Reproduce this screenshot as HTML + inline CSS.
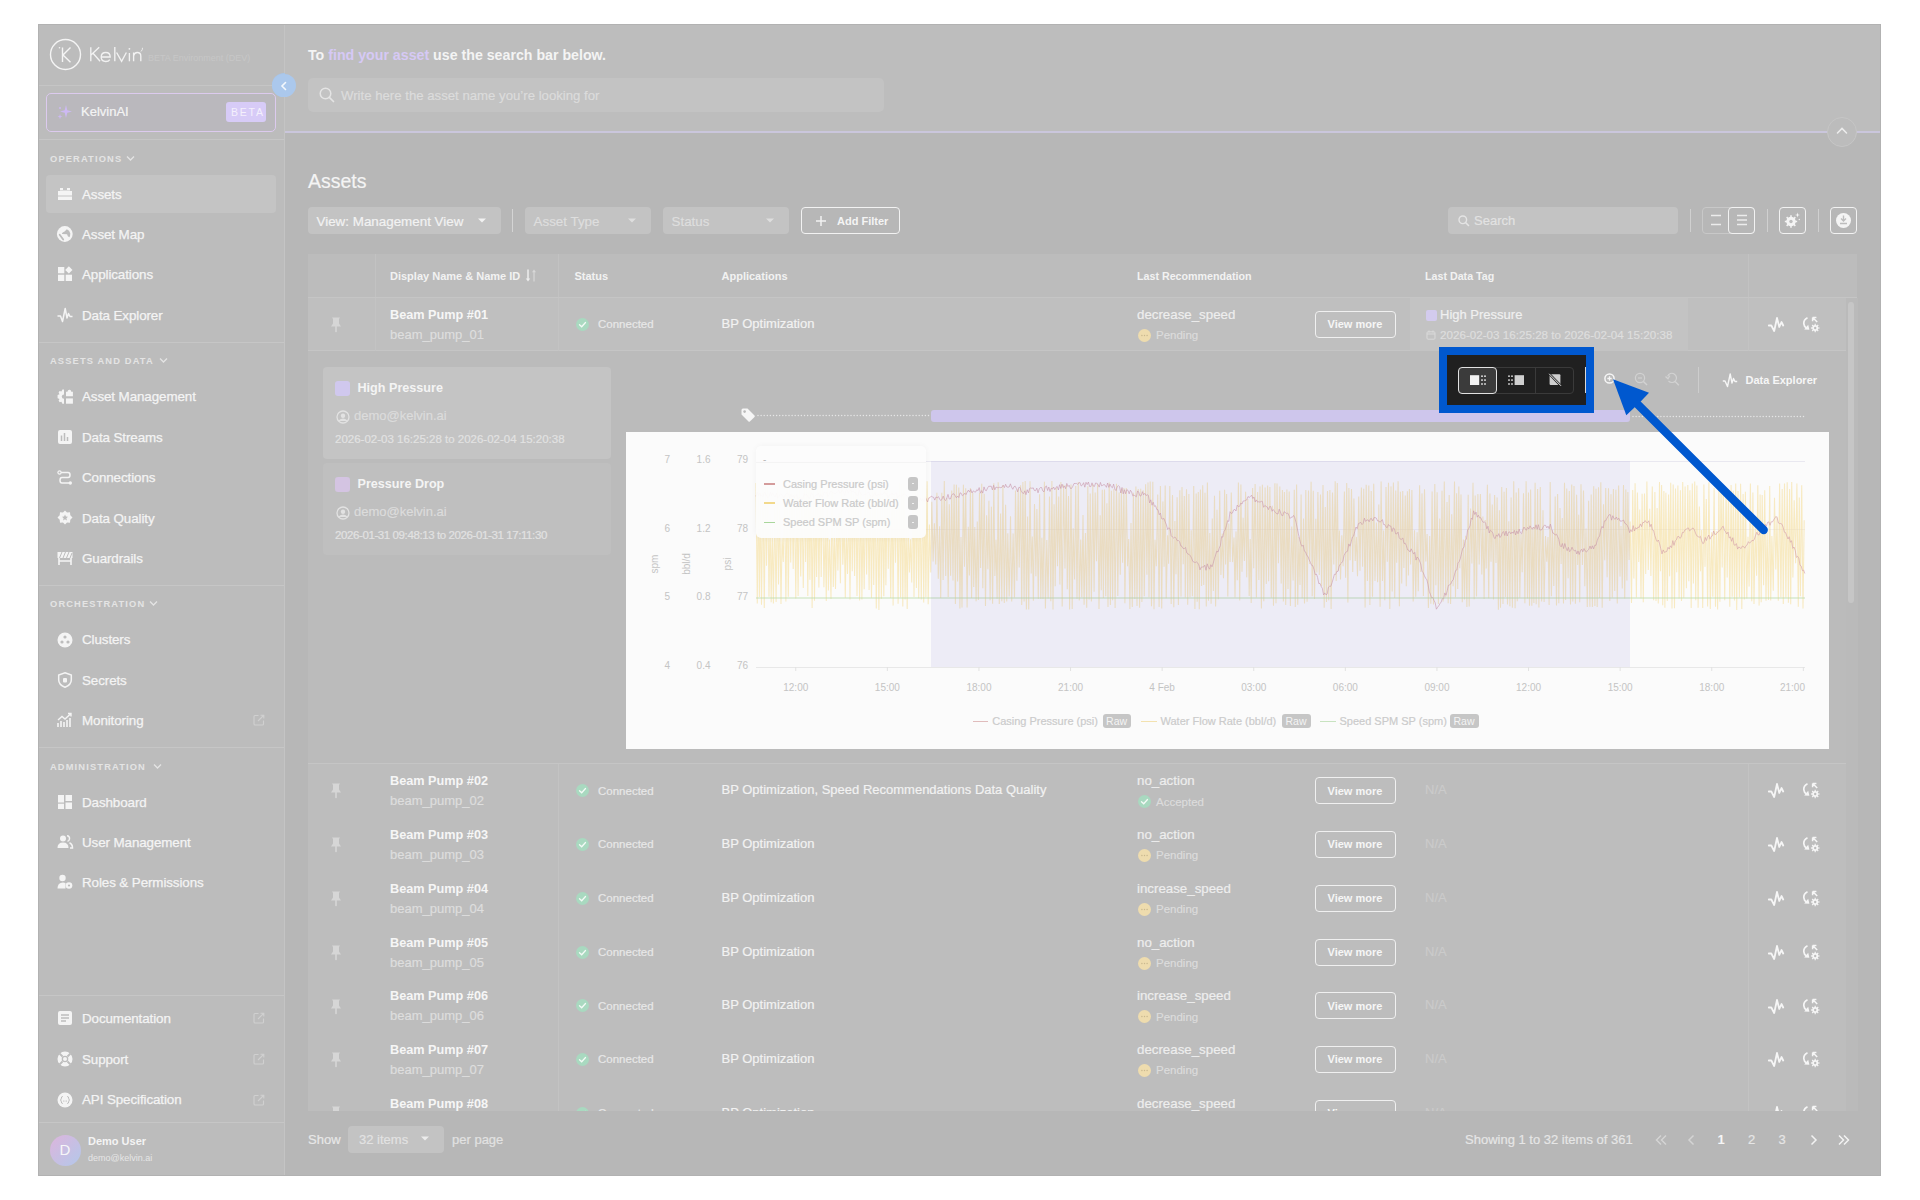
<!DOCTYPE html><html><head><meta charset="utf-8"><style>
*{box-sizing:border-box;margin:0;padding:0}
html,body{width:1920px;height:1200px;overflow:hidden;background:#fff;font-family:"Liberation Sans", sans-serif}
.a{position:absolute;white-space:nowrap;line-height:20px}
.b{position:absolute}
svg{position:absolute;overflow:visible}
</style></head><body>
<div class="b" style="left:38px;top:24px;width:1843px;height:1152px;background:#b7b7b7"></div><div class="b" style="left:38px;top:24px;width:247px;height:1152px;background:#bcbcbc;border-right:1px solid #c4c4c4"></div><svg style="left:49px;top:38px;" width="34" height="34" viewBox="0 0 34 34"><circle cx="16.5" cy="16.5" r="15" fill="none" stroke="#f4f4f4" stroke-width="1.4"/><path d="M13.5 9.5 V24 M21.5 9.5 L14 17 L21.5 24.3" fill="none" stroke="#f4f4f4" stroke-width="1.4"/><circle cx="10.5" cy="9.8" r="0.8" fill="#f4f4f4"/></svg><svg style="left:85px;top:44px;" width="64" height="22" viewBox="0 0 64 22"><g fill="none" stroke="#f2f2f2" stroke-width="1.35"><path d="M5.8 3.3 V17.3 M14.2 3.3 L6 11 M8 9.3 L15.1 17.3"/><path d="M16.4 13 H25.2 Q25.2 8.5 20.8 8.5 Q16.2 8.5 16.2 13 Q16.2 17.5 20.8 17.5 Q23.6 17.5 24.8 15.6"/><path d="M29.8 3 V17.3"/><path d="M31.6 8.5 L36.6 17.3 L41.4 8.5"/><path d="M44.4 9 V17.3"/><path d="M48.6 8.6 V17.3 M48.6 11.8 Q49.4 8.5 52.2 8.5 Q55.8 8.5 55.8 12 V17.3"/></g><circle cx="44.4" cy="4.8" r="0.9" fill="#f2f2f2"/></svg><svg style="left:139px;top:46.5px;" width="6" height="6" viewBox="0 0 6 6"><path d="M3.5 0.8 Q3.8 2.8 2 4.5" fill="none" stroke="#f0f0f0" stroke-width="0.9"/></svg><div class="a" style="left:148px;top:48px;font-size:9px;color:#c7c7c7;font-weight:400;">BETA Environment (DEV)</div><div class="b" style="left:38px;top:84.5px;width:246px;height:1.5px;background:#c5c5c5;"></div><div class="b" style="left:38px;top:139px;width:246px;height:1px;background:#c6c6c6;"></div><div class="b" style="left:46px;top:93px;width:230px;height:39px;background:#bab8bd;border:1.5px solid #dccaee;border-radius:5px"></div><svg style="left:56px;top:103px;" width="18" height="18" viewBox="0 0 18 18"><path d="M10 2 L11.3 7.2 L16 8.5 L11.3 9.8 L10 15 L8.7 9.8 L4 8.5 L8.7 7.2 Z" fill="#cdb9f3"/><path d="M4 11 L4.6 13 L6.5 13.6 L4.6 14.2 L4 16.2 L3.4 14.2 L1.5 13.6 L3.4 13 Z" fill="#cdb9f3"/><circle cx="4" cy="5" r="1" fill="#cdb9f3"/></svg><div class="a" style="left:81px;top:102px;font-size:13px;color:#f4f4f4;font-weight:400;-webkit-text-stroke:0.2px #f4f4f4;">KelvinAI</div><div class="b" style="left:226px;top:102px;width:40px;height:20px;background:#d7cbf7;border-radius:3px"></div><div class="a" style="left:231px;top:102px;font-size:10.5px;color:#f4f0fc;font-weight:400;letter-spacing:1.75px">BETA</div><div class="a" style="left:50px;top:148.5px;font-size:9.3px;color:#e4e4e4;font-weight:700;letter-spacing:1.15px">OPERATIONS</div><svg style="left:126px;top:154.5px;" width="9" height="7" viewBox="0 0 9 7"><path d="M1 1.5 L4.5 5 L8 1.5" fill="none" stroke="#e4e4e4" stroke-width="1.3"/></svg><div class="a" style="left:50px;top:351px;font-size:9.3px;color:#e4e4e4;font-weight:700;letter-spacing:1.15px">ASSETS AND DATA</div><svg style="left:159px;top:357px;" width="9" height="7" viewBox="0 0 9 7"><path d="M1 1.5 L4.5 5 L8 1.5" fill="none" stroke="#e4e4e4" stroke-width="1.3"/></svg><div class="a" style="left:50px;top:594px;font-size:9.3px;color:#e4e4e4;font-weight:700;letter-spacing:1.15px">ORCHESTRATION</div><svg style="left:149px;top:600px;" width="9" height="7" viewBox="0 0 9 7"><path d="M1 1.5 L4.5 5 L8 1.5" fill="none" stroke="#e4e4e4" stroke-width="1.3"/></svg><div class="a" style="left:50px;top:756.5px;font-size:9.3px;color:#e4e4e4;font-weight:700;letter-spacing:1.15px">ADMINISTRATION</div><svg style="left:153px;top:762.5px;" width="9" height="7" viewBox="0 0 9 7"><path d="M1 1.5 L4.5 5 L8 1.5" fill="none" stroke="#e4e4e4" stroke-width="1.3"/></svg><div class="b" style="left:38px;top:342px;width:246px;height:1px;background:#c6c6c6;"></div><div class="b" style="left:38px;top:585px;width:246px;height:1px;background:#c6c6c6;"></div><div class="b" style="left:38px;top:747px;width:246px;height:1px;background:#c6c6c6;"></div><div class="b" style="left:38px;top:995px;width:246px;height:1px;background:#c6c6c6;"></div><div class="b" style="left:38px;top:1122px;width:246px;height:1px;background:#c6c6c6;"></div><div class="b" style="left:46px;top:175px;width:230px;height:38px;background:#c4c4c4;border-radius:4px"></div><svg style="left:57px;top:186px;" width="16" height="16" viewBox="0 0 16 16"><path d="M1 5 H15 V9.5 H1 Z M1 10.5 H15 V14 H1 Z M3 2 H6 V4 H10 V2 H13 V4.5 H3 Z" fill="#f4f4f4"/></svg><div class="a" style="left:82px;top:184.5px;font-size:13.4px;color:#f4f4f4;font-weight:400;-webkit-text-stroke:0.2px #f4f4f4;-webkit-text-stroke:0.25px #f4f4f4;letter-spacing:-0.1px">Assets</div><svg style="left:57px;top:226px;" width="16" height="16" viewBox="0 0 16 16"><circle cx="7.8" cy="8" r="7.9" fill="#f4f4f4"/><path d="M2.7 8.7 L6.2 13.5" stroke="#bdbdbd" stroke-width="1.8" stroke-linecap="round"/><path d="M4.9 7.2 Q6 6 7.6 5.4 L9.8 3.2 Q12.6 4.3 13.3 7.4 Q13.3 9.6 12.4 11.2 Q10.4 10.6 10.1 8.3 Q7.4 8.1 5.2 8 Z" fill="#bdbdbd"/></svg><div class="a" style="left:82px;top:224.5px;font-size:13.4px;color:#f4f4f4;font-weight:400;-webkit-text-stroke:0.2px #f4f4f4;-webkit-text-stroke:0.25px #f4f4f4;letter-spacing:-0.1px">Asset Map</div><svg style="left:57px;top:266px;" width="16" height="16" viewBox="0 0 16 16"><rect x="1" y="1" width="6.3" height="6.3" fill="#f4f4f4"/><rect x="1" y="8.7" width="6.3" height="6.3" fill="#f4f4f4"/><rect x="8.7" y="8.7" width="6.3" height="6.3" fill="#f4f4f4"/><path d="M11.85 0.3 L15.5 3.95 L11.85 7.6 L8.2 3.95 Z" fill="#f4f4f4"/></svg><div class="a" style="left:82px;top:265.0px;font-size:13.4px;color:#f4f4f4;font-weight:400;-webkit-text-stroke:0.2px #f4f4f4;-webkit-text-stroke:0.25px #f4f4f4;letter-spacing:-0.1px">Applications</div><svg style="left:57px;top:307px;" width="16" height="16" viewBox="0 0 16 16"><path d="M0.5 9 L3.5 9 L5.5 14.5 L8.2 1.5 L10 11 L11.5 6.5 L13 9.5 L15.5 9.5" fill="none" stroke="#f4f4f4" stroke-width="1.5" stroke-linejoin="round"/></svg><div class="a" style="left:82px;top:305.5px;font-size:13.4px;color:#f4f4f4;font-weight:400;-webkit-text-stroke:0.2px #f4f4f4;-webkit-text-stroke:0.25px #f4f4f4;letter-spacing:-0.1px">Data Explorer</div><svg style="left:57px;top:389px;" width="16" height="16" viewBox="0 0 16 16"><path d="M7 0.4 V14.7 H5.4 L4.4 12.8 L2.6 13.2 L1.6 11.6 L2.5 10 L0.6 9.2 V6 L2.5 5.2 L1.6 3.6 L2.6 2 L4.4 2.4 L5.4 0.4 Z" fill="#f4f4f4"/><circle cx="7" cy="7.6" r="2.2" fill="#bdbdbd"/><path d="M9 7.2 V2.8 H10.4 Q10.9 0.5 12.6 0.7 Q14 0.9 14.3 2.8 H15.9 V7.2 Z" fill="#f4f4f4"/><rect x="9" y="9.4" width="6.9" height="5.3" fill="#f4f4f4"/></svg><div class="a" style="left:82px;top:387.3px;font-size:13.4px;color:#f4f4f4;font-weight:400;-webkit-text-stroke:0.2px #f4f4f4;-webkit-text-stroke:0.25px #f4f4f4;letter-spacing:-0.1px">Asset Management</div><svg style="left:57px;top:429px;" width="16" height="16" viewBox="0 0 16 16"><rect x="1" y="1" width="14" height="14" rx="2" fill="#f4f4f4"/><path d="M4.5 6.5 V12 M7.5 4 V12 M10.5 8 V12" stroke="#bdbdbd" stroke-width="1.5"/></svg><div class="a" style="left:82px;top:427.5px;font-size:13.4px;color:#f4f4f4;font-weight:400;-webkit-text-stroke:0.2px #f4f4f4;-webkit-text-stroke:0.25px #f4f4f4;letter-spacing:-0.1px">Data Streams</div><svg style="left:57px;top:470px;" width="16" height="16" viewBox="0 0 16 16"><circle cx="2.5" cy="2.5" r="1.6" fill="none" stroke="#f4f4f4" stroke-width="1.2"/><path d="M4 2.5 H11 Q13 2.5 13 5 Q13 7.5 11 7.5 H5 Q3 7.5 3 10.2 Q3 13 5 13 H12" fill="none" stroke="#f4f4f4" stroke-width="1.5"/><circle cx="13.3" cy="13" r="1.7" fill="#f4f4f4"/></svg><div class="a" style="left:82px;top:468.0px;font-size:13.4px;color:#f4f4f4;font-weight:400;-webkit-text-stroke:0.2px #f4f4f4;-webkit-text-stroke:0.25px #f4f4f4;letter-spacing:-0.1px">Connections</div><svg style="left:57px;top:510px;" width="16" height="16" viewBox="0 0 16 16"><path d="M8 0.5 L10 2.5 L13 2.2 L13.3 5.2 L15.5 7.5 L13.3 9.8 L13 12.8 L10 12.5 L8 14.5 L6 12.5 L3 12.8 L2.7 9.8 L0.5 7.5 L2.7 5.2 L3 2.2 L6 2.5 Z" fill="#f4f4f4"/><path d="M8 4.5 L8.9 6.6 L11 6.8 L9.4 8.2 L9.9 10.4 L8 9.2 L6.1 10.4 L6.6 8.2 L5 6.8 L7.1 6.6 Z" fill="#bdbdbd"/></svg><div class="a" style="left:82px;top:508.5px;font-size:13.4px;color:#f4f4f4;font-weight:400;-webkit-text-stroke:0.2px #f4f4f4;-webkit-text-stroke:0.25px #f4f4f4;letter-spacing:-0.1px">Data Quality</div><svg style="left:57px;top:550px;" width="16" height="16" viewBox="0 0 16 16"><rect x="0.5" y="2" width="15" height="6" fill="#f4f4f4"/><path d="M2.5 8 L5 2 M6 8 L8.5 2 M9.5 8 L12 2 M13 8 L15 3" stroke="#bdbdbd" stroke-width="1"/><path d="M2 8 V15 M14 8 V15 M2 11 H14" stroke="#f4f4f4" stroke-width="1.6"/></svg><div class="a" style="left:82px;top:548.5px;font-size:13.4px;color:#f4f4f4;font-weight:400;-webkit-text-stroke:0.2px #f4f4f4;-webkit-text-stroke:0.25px #f4f4f4;letter-spacing:-0.1px">Guardrails</div><svg style="left:57px;top:632px;" width="16" height="16" viewBox="0 0 16 16"><circle cx="8" cy="8" r="7.5" fill="#f4f4f4"/><circle cx="8" cy="5" r="1.6" fill="#bdbdbd"/><circle cx="5" cy="10" r="1.6" fill="#bdbdbd"/><circle cx="11" cy="10" r="1.6" fill="#bdbdbd"/></svg><div class="a" style="left:82px;top:630.1px;font-size:13.4px;color:#f4f4f4;font-weight:400;-webkit-text-stroke:0.2px #f4f4f4;-webkit-text-stroke:0.25px #f4f4f4;letter-spacing:-0.1px">Clusters</div><svg style="left:57px;top:672px;" width="16" height="16" viewBox="0 0 16 16"><path d="M8 0.8 L14.3 3 V8 Q14.3 12.8 8 15.2 Q1.7 12.8 1.7 8 V3 Z" fill="none" stroke="#f4f4f4" stroke-width="1.5"/><rect x="6" y="6" width="4" height="4.5" rx="1" fill="#f4f4f4"/></svg><div class="a" style="left:82px;top:670.5px;font-size:13.4px;color:#f4f4f4;font-weight:400;-webkit-text-stroke:0.2px #f4f4f4;-webkit-text-stroke:0.25px #f4f4f4;letter-spacing:-0.1px">Secrets</div><svg style="left:57px;top:712px;" width="16" height="16" viewBox="0 0 16 16"><path d="M1 15 V11 M4 15 V9 M7 15 V10 M10 15 V8 M13 15 V6" stroke="#f4f4f4" stroke-width="1.6"/><path d="M1 8 L5 4.5 L8 7 L14 1.5 M11 1.5 H14 V4.5" fill="none" stroke="#f4f4f4" stroke-width="1.4"/></svg><div class="a" style="left:82px;top:711.0px;font-size:13.4px;color:#f4f4f4;font-weight:400;-webkit-text-stroke:0.2px #f4f4f4;-webkit-text-stroke:0.25px #f4f4f4;letter-spacing:-0.1px">Monitoring</div><svg style="left:57px;top:794px;" width="16" height="16" viewBox="0 0 16 16"><rect x="1" y="1" width="6" height="14" fill="#f4f4f4"/><rect x="8.5" y="1" width="6.5" height="6" fill="#f4f4f4"/><rect x="8.5" y="8.5" width="6.5" height="6.5" fill="#f4f4f4"/><rect x="1" y="8.5" width="6" height="1.2" fill="#bdbdbd"/></svg><div class="a" style="left:82px;top:792.5px;font-size:13.4px;color:#f4f4f4;font-weight:400;-webkit-text-stroke:0.2px #f4f4f4;-webkit-text-stroke:0.25px #f4f4f4;letter-spacing:-0.1px">Dashboard</div><svg style="left:57px;top:834px;" width="16" height="16" viewBox="0 0 16 16"><circle cx="6" cy="4.5" r="3" fill="#f4f4f4"/><path d="M0.5 14 Q0.5 8.5 6 8.5 Q11.5 8.5 11.5 14 Z" fill="#f4f4f4"/><path d="M10 1.8 Q12.8 2 12.5 5 Q12.2 7 10.5 7.3 M12.5 8.8 Q15.5 10 15.5 14 H13" fill="none" stroke="#f4f4f4" stroke-width="1.5"/></svg><div class="a" style="left:82px;top:832.5px;font-size:13.4px;color:#f4f4f4;font-weight:400;-webkit-text-stroke:0.2px #f4f4f4;-webkit-text-stroke:0.25px #f4f4f4;letter-spacing:-0.1px">User Management</div><svg style="left:57px;top:874px;" width="16" height="16" viewBox="0 0 16 16"><circle cx="5.5" cy="4" r="3.2" fill="#f4f4f4"/><path d="M0.5 14.5 Q0.5 8.5 6 8.5 L8.5 9 V14.5 Z" fill="#f4f4f4"/><circle cx="12" cy="11.5" r="3.3" fill="#f4f4f4"/><circle cx="12" cy="11.5" r="1.1" fill="#bdbdbd"/></svg><div class="a" style="left:82px;top:872.9px;font-size:13.4px;color:#f4f4f4;font-weight:400;-webkit-text-stroke:0.2px #f4f4f4;-webkit-text-stroke:0.25px #f4f4f4;letter-spacing:-0.1px">Roles &amp; Permissions</div><svg style="left:57px;top:1010px;" width="16" height="16" viewBox="0 0 16 16"><rect x="1" y="1" width="14" height="14" rx="2" fill="#f4f4f4"/><path d="M4 5 H12 M4 8 H12 M4 11 H9" stroke="#bdbdbd" stroke-width="1.3"/></svg><div class="a" style="left:82px;top:1008.9px;font-size:13.4px;color:#f4f4f4;font-weight:400;-webkit-text-stroke:0.2px #f4f4f4;-webkit-text-stroke:0.25px #f4f4f4;letter-spacing:-0.1px">Documentation</div><svg style="left:57px;top:1051px;" width="16" height="16" viewBox="0 0 16 16"><circle cx="8" cy="8" r="7.5" fill="#f4f4f4"/><circle cx="8" cy="8" r="3.3" fill="#bdbdbd"/><circle cx="8" cy="8" r="2" fill="#f4f4f4"/><path d="M2.5 2.5 L5.5 5.5 M13.5 2.5 L10.5 5.5 M2.5 13.5 L5.5 10.5 M13.5 13.5 L10.5 10.5" stroke="#bdbdbd" stroke-width="1.8"/></svg><div class="a" style="left:82px;top:1049.5px;font-size:13.4px;color:#f4f4f4;font-weight:400;-webkit-text-stroke:0.2px #f4f4f4;-webkit-text-stroke:0.25px #f4f4f4;letter-spacing:-0.1px">Support</div><svg style="left:57px;top:1092px;" width="16" height="16" viewBox="0 0 16 16"><circle cx="8" cy="8" r="7.5" fill="#f4f4f4"/><path d="M5.8 4.5 Q4.3 4.5 4.3 6.2 V7 L3.4 8 L4.3 9 V9.8 Q4.3 11.5 5.8 11.5 M10.2 4.5 Q11.7 4.5 11.7 6.2 V7 L12.6 8 L11.7 9 V9.8 Q11.7 11.5 10.2 11.5" fill="none" stroke="#bdbdbd" stroke-width="1"/><circle cx="6.5" cy="9" r="0.55" fill="#bdbdbd"/><circle cx="8" cy="9" r="0.55" fill="#bdbdbd"/><circle cx="9.5" cy="9" r="0.55" fill="#bdbdbd"/></svg><div class="a" style="left:82px;top:1090.0px;font-size:13.4px;color:#f4f4f4;font-weight:400;-webkit-text-stroke:0.2px #f4f4f4;-webkit-text-stroke:0.25px #f4f4f4;letter-spacing:-0.1px">API Specification</div><svg style="left:253px;top:714px;" width="12" height="12" viewBox="0 0 12 12"><path d="M5.5 1.5 H2 Q1 1.5 1 2.5 V10 Q1 11 2 11 H9.5 Q10.5 11 10.5 10 V6.5" fill="none" stroke="#d0d0d0" stroke-width="1.1"/><path d="M5 7 L10.5 1.5 M7.5 1.2 H10.8 V4.5" fill="none" stroke="#d0d0d0" stroke-width="1.1"/></svg><svg style="left:253px;top:1012px;" width="12" height="12" viewBox="0 0 12 12"><path d="M5.5 1.5 H2 Q1 1.5 1 2.5 V10 Q1 11 2 11 H9.5 Q10.5 11 10.5 10 V6.5" fill="none" stroke="#d0d0d0" stroke-width="1.1"/><path d="M5 7 L10.5 1.5 M7.5 1.2 H10.8 V4.5" fill="none" stroke="#d0d0d0" stroke-width="1.1"/></svg><svg style="left:253px;top:1053px;" width="12" height="12" viewBox="0 0 12 12"><path d="M5.5 1.5 H2 Q1 1.5 1 2.5 V10 Q1 11 2 11 H9.5 Q10.5 11 10.5 10 V6.5" fill="none" stroke="#d0d0d0" stroke-width="1.1"/><path d="M5 7 L10.5 1.5 M7.5 1.2 H10.8 V4.5" fill="none" stroke="#d0d0d0" stroke-width="1.1"/></svg><svg style="left:253px;top:1094px;" width="12" height="12" viewBox="0 0 12 12"><path d="M5.5 1.5 H2 Q1 1.5 1 2.5 V10 Q1 11 2 11 H9.5 Q10.5 11 10.5 10 V6.5" fill="none" stroke="#d0d0d0" stroke-width="1.1"/><path d="M5 7 L10.5 1.5 M7.5 1.2 H10.8 V4.5" fill="none" stroke="#d0d0d0" stroke-width="1.1"/></svg><div class="b" style="left:271.5px;top:73px;width:24px;height:24px;border-radius:50%;background:#a8c4e7"></div><svg style="left:278px;top:79px;" width="12" height="12" viewBox="0 0 12 12"><path d="M7.5 2.5 L4 6 L7.5 9.5" fill="none" stroke="#f4f8fc" stroke-width="1.6" stroke-linecap="round"/></svg><div class="b" style="left:49.5px;top:1134.5px;width:31px;height:31px;border-radius:50%;background:linear-gradient(135deg,#ddb5dc,#b3c8ea)"></div><div class="a" style="left:49.5px;top:1140px;width:31px;text-align:center;font-size:15px;color:#f6f6f8">D</div><div class="a" style="left:88px;top:1131px;font-size:11px;color:#f4f4f4;font-weight:700;">Demo User</div><div class="a" style="left:88px;top:1148px;font-size:9px;color:#e6e6e6;font-weight:400;">demo@kelvin.ai</div><div class="b" style="left:285px;top:24px;width:1596px;height:107px;background:#bdbdbd;"></div><div class="b" style="left:285px;top:131px;width:1596px;height:2px;background:#cac6dc;"></div><div class="a" style="left:308px;top:44.5px;font-size:14.2px;font-weight:700;color:#f4f4f4">To <span style="color:#d6c9f5">find your asset</span> use the search bar below.</div><div class="b" style="left:308px;top:78px;width:576px;height:34px;background:#c3c3c3;border-radius:5px"></div><svg style="left:318px;top:86px;" width="18" height="18" viewBox="0 0 18 18"><circle cx="7.5" cy="7.5" r="5.3" fill="none" stroke="#e4e4e4" stroke-width="1.5"/><path d="M11.3 11.3 L15.5 15.5" stroke="#e4e4e4" stroke-width="1.7" stroke-linecap="round"/></svg><div class="a" style="left:341px;top:85.5px;font-size:13.2px;color:#dcdcdc;font-weight:400;-webkit-text-stroke:0.2px #dcdcdc;">Write here the asset name you&#8217;re looking for</div><div class="b" style="left:1826.5px;top:116.5px;width:30px;height:30px;border-radius:50%;background:#bcbcbc;border:1px solid #c6c6c6"></div><svg style="left:1835px;top:125px;" width="14" height="12" viewBox="0 0 14 12"><path d="M2.5 8 L7 3.5 L11.5 8" fill="none" stroke="#ececec" stroke-width="1.6" stroke-linecap="round"/></svg><div class="a" style="left:308px;top:170.5px;font-size:19.5px;color:#f4f4f4;font-weight:400;-webkit-text-stroke:0.2px #f4f4f4;">Assets</div><div class="b" style="left:308px;top:207px;width:193px;height:27px;background:#c3c3c3;border-radius:4px"></div><div class="a" style="left:316.5px;top:211.5px;font-size:13.4px;color:#f2f2f2;font-weight:400;-webkit-text-stroke:0.2px #f2f2f2;">View: Management View</div><svg style="left:477px;top:217px;" width="10" height="8" viewBox="0 0 10 8"><path d="M1 1.5 H9 L5 5.5 Z" fill="#f2f2f2"/></svg><div class="b" style="left:512px;top:209px;width:1px;height:23px;background:#d4d4d4;"></div><div class="b" style="left:525px;top:207px;width:126px;height:27px;background:#c3c3c3;border-radius:4px"></div><div class="a" style="left:533.5px;top:211.5px;font-size:13.4px;color:#dedede;font-weight:400;-webkit-text-stroke:0.2px #dedede;">Asset Type</div><svg style="left:627px;top:217px;" width="10" height="8" viewBox="0 0 10 8"><path d="M1 1.5 H9 L5 5.5 Z" fill="#dedede"/></svg><div class="b" style="left:663px;top:207px;width:126px;height:27px;background:#c3c3c3;border-radius:4px"></div><div class="a" style="left:671.5px;top:211.5px;font-size:13.4px;color:#dedede;font-weight:400;-webkit-text-stroke:0.2px #dedede;">Status</div><svg style="left:765px;top:217px;" width="10" height="8" viewBox="0 0 10 8"><path d="M1 1.5 H9 L5 5.5 Z" fill="#dedede"/></svg><div class="b" style="left:801px;top:207px;width:99px;height:27px;background:none;border:1.3px solid #f2f2f2;border-radius:4px"></div><svg style="left:814px;top:214px;" width="14" height="14" viewBox="0 0 14 14"><path d="M7 2 V12 M2 7 H12" stroke="#f2f2f2" stroke-width="1.5"/></svg><div class="a" style="left:837px;top:211px;font-size:11px;color:#f4f4f4;font-weight:700;">Add Filter</div><div class="b" style="left:1448px;top:207px;width:230px;height:27px;background:#c3c3c3;border-radius:4px"></div><svg style="left:1457px;top:214px;" width="14" height="14" viewBox="0 0 14 14"><circle cx="5.8" cy="5.8" r="3.8" fill="none" stroke="#e4e4e4" stroke-width="1.4"/><path d="M8.5 8.5 L11.5 11.5" stroke="#e4e4e4" stroke-width="1.6" stroke-linecap="round"/></svg><div class="a" style="left:1474px;top:211px;font-size:13px;color:#e2e2e2;font-weight:400;-webkit-text-stroke:0.2px #e2e2e2;">Search</div><div class="b" style="left:1690px;top:209px;width:1px;height:23px;background:#d0d0d0;"></div><div class="b" style="left:1702px;top:207px;width:53px;height:27px;background:none;border:1px solid #c8c8c8;border-radius:4px"></div><div class="b" style="left:1728px;top:207px;width:27px;height:27px;background:none;border:1.3px solid #f2f2f2;border-radius:4px"></div><svg style="left:1708px;top:212px;" width="16" height="16" viewBox="0 0 16 16"><path d="M3 3.5 H13 M3 12.5 H13" stroke="#ececec" stroke-width="1.3"/></svg><svg style="left:1734px;top:212px;" width="16" height="16" viewBox="0 0 16 16"><path d="M3 3.5 H13 M3 8 H13 M3 12.5 H13" stroke="#ececec" stroke-width="1.3"/></svg><div class="b" style="left:1767px;top:209px;width:1px;height:23px;background:#d0d0d0;"></div><div class="b" style="left:1779px;top:207px;width:27px;height:27px;background:none;border:1.3px solid #f2f2f2;border-radius:4px"></div><svg style="left:1783px;top:211px;" width="19" height="19" viewBox="0 0 19 19"><path d="M12.53 9.69 L14.15 9.74 L14.15 11.26 L12.53 11.31 L11.77 13.13 L12.89 14.31 L11.81 15.39 L10.63 14.27 L8.81 15.03 L8.76 16.65 L7.24 16.65 L7.19 15.03 L5.37 14.27 L4.19 15.39 L3.11 14.31 L4.23 13.13 L3.47 11.31 L1.85 11.26 L1.85 9.74 L3.47 9.69 L4.23 7.87 L3.11 6.69 L4.19 5.61 L5.37 6.73 L7.19 5.97 L7.24 4.35 L8.76 4.35 L8.81 5.97 L10.63 6.73 L11.81 5.61 L12.89 6.69 L11.77 7.87 Z" fill="#f4f4f4"/><circle cx="8" cy="10.5" r="4.6" fill="#f4f4f4"/><circle cx="8" cy="10.5" r="1.7" fill="#bdbdbd"/><path d="M14.5 1.5 L15.1 3.4 L17 4 L15.1 4.6 L14.5 6.5 L13.9 4.6 L12 4 L13.9 3.4 Z" fill="#f4f4f4"/><circle cx="16.3" cy="8.5" r="0.7" fill="#f4f4f4"/></svg><div class="b" style="left:1818px;top:209px;width:1px;height:23px;background:#d0d0d0;"></div><div class="b" style="left:1830px;top:207px;width:27px;height:27px;background:none;border:1.3px solid #f2f2f2;border-radius:4px"></div><svg style="left:1834px;top:211px;" width="19" height="19" viewBox="0 0 19 19"><circle cx="9.5" cy="9.5" r="7.5" fill="#f4f4f4"/><path d="M9.5 4.5 V10 M7 7.5 L9.5 10 L12 7.5 M6 12.5 H13" fill="none" stroke="#bdbdbd" stroke-width="1.4"/></svg><div class="b" style="left:308px;top:253.5px;width:1549px;height:43.5px;background:#bcbcbc;"></div><div class="b" style="left:375px;top:253.5px;width:1px;height:43.5px;background:#c2c2c2;"></div><div class="b" style="left:558px;top:253.5px;width:1px;height:43.5px;background:#c2c2c2;"></div><div class="b" style="left:1747.5px;top:253.5px;width:1px;height:43.5px;background:#c2c2c2;"></div><div class="b" style="left:308px;top:296.5px;width:1549px;height:1px;background:#c5c5c5;"></div><div class="a" style="left:390px;top:265.5px;font-size:11px;color:#f2f2f2;font-weight:700;">Display Name &amp; Name ID</div><svg style="left:524px;top:268px;" width="14" height="16" viewBox="0 0 14 16"><path d="M4 1.5 V12" stroke="#eeeeee" stroke-width="1.5"/><path d="M1.8 10.5 L4 13.5 L6.2 10.5 Z" fill="#eeeeee"/><path d="M10 3 V13.5" stroke="#d8d8d8" stroke-width="1.2"/><path d="M8 4.2 L10 1.5 L12 4.2 Z" fill="#d8d8d8"/></svg><div class="a" style="left:574.5px;top:265.5px;font-size:11px;color:#f2f2f2;font-weight:700;">Status</div><div class="a" style="left:721.5px;top:265.5px;font-size:11px;color:#f2f2f2;font-weight:700;">Applications</div><div class="a" style="left:1137px;top:265.5px;font-size:10.7px;color:#f2f2f2;font-weight:700;">Last Recommendation</div><div class="a" style="left:1425px;top:265.5px;font-size:10.7px;color:#f2f2f2;font-weight:700;">Last Data Tag</div><div class="b" style="left:1846px;top:297.5px;width:12px;height:813px;background:#bababa;"></div><div class="b" style="left:1848px;top:302px;width:6px;height:301px;background:#c6c6c6;border-radius:3px"></div><div class="b" style="left:308px;top:297.5px;width:1538px;height:53px;background:#bfbfbf;"></div><div class="b" style="left:308px;top:350px;width:1538px;height:1px;background:#c5c5c5;"></div><div class="b" style="left:558px;top:297.5px;width:1px;height:53px;background:#c3c3c3;"></div><div class="b" style="left:1747.5px;top:297.5px;width:1px;height:53px;background:#c3c3c3;"></div><svg style="left:330px;top:316px;" width="12" height="16" viewBox="0 0 12 16"><path d="M2 1.5 H10 L9 3 V7.5 L11 10.5 H1 L3 7.5 V3 Z" fill="#d6d6d6"/><path d="M6 10.5 V15.5" stroke="#d6d6d6" stroke-width="1.6" stroke-linecap="round"/></svg><div class="a" style="left:390px;top:304.5px;font-size:12.7px;color:#f6f6f6;font-weight:700;">Beam Pump #01</div><div class="a" style="left:390px;top:324.5px;font-size:13px;color:#dedede;font-weight:400;-webkit-text-stroke:0.2px #dedede;">beam_pump_01</div><div class="b" style="left:575.5px;top:317.5px;width:13.0px;height:13.0px;border-radius:50%;background:#a9d9c0"></div><svg style="left:575.5px;top:317.5px;" width="13.0" height="13.0" viewBox="0 0 13.0 13.0"><path d="M3.5 6.7 L5.7 8.8 L9.5 4.5" fill="none" stroke="#f4faf6" stroke-width="1.3" stroke-linecap="round"/></svg><div class="a" style="left:598px;top:314.0px;font-size:11.5px;color:#e8e8e8;font-weight:400;-webkit-text-stroke:0.2px #e8e8e8;">Connected</div><div class="a" style="left:721.5px;top:313.5px;font-size:13px;color:#f2f2f2;font-weight:400;-webkit-text-stroke:0.2px #f2f2f2;">BP Optimization</div><div class="a" style="left:1137px;top:304.5px;font-size:13.3px;color:#eeeeee;font-weight:400;-webkit-text-stroke:0.2px #eeeeee;">decrease_speed</div><div class="b" style="left:1138.0px;top:328.5px;width:13.0px;height:13.0px;border-radius:50%;background:#eedcae"></div><svg style="left:1138.0px;top:328.5px;" width="13.0" height="13.0" viewBox="0 0 13.0 13.0"><circle cx="3.9" cy="6.5" r="0.7" fill="#c9b88f"/><circle cx="6.5" cy="6.5" r="0.7" fill="#c9b88f"/><circle cx="9.1" cy="6.5" r="0.7" fill="#c9b88f"/></svg><div class="a" style="left:1156px;top:325.0px;font-size:11.5px;color:#dcdcdc;font-weight:400;-webkit-text-stroke:0.2px #dcdcdc;">Pending</div><div class="b" style="left:1314.5px;top:310.5px;width:81px;height:27px;background:none;border:1.3px solid #f0f0f0;border-radius:4px"></div><div class="a" style="left:1327.5px;top:314.0px;font-size:11px;color:#f6f6f6;font-weight:700;">View more</div><div class="b" style="left:1410px;top:297.5px;width:278px;height:53px;background:#c3c3c3;"></div><div class="b" style="left:1425.5px;top:309.5px;width:11px;height:11px;background:#d3cbee;border-radius:2px"></div><div class="a" style="left:1440px;top:304.5px;font-size:13px;color:#f0f0f0;font-weight:400;-webkit-text-stroke:0.2px #f0f0f0;">High Pressure</div><svg style="left:1426px;top:330px;" width="10" height="10" viewBox="0 0 10 10"><rect x="1" y="1.8" width="8" height="7.4" rx="1" fill="none" stroke="#dadada" stroke-width="1"/><path d="M1 4 H9 M3 0.5 V2.5 M7 0.5 V2.5" stroke="#dadada" stroke-width="1"/></svg><div class="a" style="left:1440px;top:325.0px;font-size:11.65px;color:#dedede;font-weight:400;-webkit-text-stroke:0.2px #dedede;">2026-02-03 16:25:28 to 2026-02-04 15:20:38</div><svg style="left:1767.5px;top:316px;" width="17" height="17" viewBox="0 0 17 17"><path d="M0.8 9.5 L3.3 9.5 L6.2 15 L9 2 L11.3 11 L13.5 6 L15.2 9.5" fill="none" stroke="#f6f6f6" stroke-width="1.8" stroke-linejoin="round" stroke-linecap="round"/></svg><svg style="left:1802px;top:316px;" width="18" height="17" viewBox="0 0 18 17"><path d="M5.5 1.8 Q1.6 3.6 1.8 7.6 Q2 10.6 4.6 12" fill="none" stroke="#f6f6f6" stroke-width="1.7"/><path d="M2.2 13.6 L7.4 13.8 L6.2 8.8 Z" fill="#f6f6f6"/><path d="M10.6 1.4 V5.2 M10.6 1.4 H14.4 M10.9 1.7 L15.2 6" fill="none" stroke="#f6f6f6" stroke-width="1.5"/><path d="M16.24 11.40 L17.45 11.37 L17.45 12.63 L16.24 12.60 L15.78 13.72 L16.65 14.56 L15.76 15.45 L14.92 14.58 L13.80 15.04 L13.83 16.25 L12.57 16.25 L12.60 15.04 L11.48 14.58 L10.64 15.45 L9.75 14.56 L10.62 13.72 L10.16 12.60 L8.95 12.63 L8.95 11.37 L10.16 11.40 L10.62 10.28 L9.75 9.44 L10.64 8.55 L11.48 9.42 L12.60 8.96 L12.57 7.75 L13.83 7.75 L13.80 8.96 L14.92 9.42 L15.76 8.55 L16.65 9.44 L15.78 10.28 Z" fill="#f6f6f6"/><circle cx="13.2" cy="12" r="1.2" fill="#bdbdbd"/></svg><div class="b" style="left:375px;top:297.5px;width:1px;height:53px;background:#c3c3c3;"></div><div class="b" style="left:308px;top:350.5px;width:1538px;height:413px;background:#bbbbbb;"></div><div class="b" style="left:308px;top:763px;width:1538px;height:1px;background:#c5c5c5;"></div><div class="b" style="left:323px;top:367px;width:288px;height:92px;background:#c4c4c4;border-radius:4px"></div><div class="b" style="left:323px;top:463px;width:288px;height:91.5px;background:#bfbfbf;border-radius:4px"></div><div class="b" style="left:335px;top:381px;width:15px;height:15px;background:#d0c8ee;border-radius:3px"></div><div class="a" style="left:357.5px;top:378.3px;font-size:12.6px;color:#f4f4f4;font-weight:700;">High Pressure</div><svg style="left:335.5px;top:409.5px;" width="14" height="14" viewBox="0 0 14 14"><circle cx="7" cy="7" r="6" fill="none" stroke="#e2e2e2" stroke-width="1.3"/><circle cx="7" cy="5.8" r="2.2" fill="#e2e2e2"/><path d="M3 11 Q7 7.5 11 11" fill="#e2e2e2" stroke="#e2e2e2" stroke-width="1.3"/></svg><div class="a" style="left:354px;top:406.3px;font-size:13px;color:#dcdcdc;font-weight:400;-webkit-text-stroke:0.2px #dcdcdc;">demo@kelvin.ai</div><div class="a" style="left:335px;top:429px;font-size:11.5px;color:#e2e2e2;font-weight:400;-webkit-text-stroke:0.2px #e2e2e2;">2026-02-03 16:25:28 to 2026-02-04 15:20:38</div><div class="b" style="left:335px;top:477px;width:15px;height:15px;background:#d4c4e2;border-radius:3px"></div><div class="a" style="left:357.5px;top:474.3px;font-size:12.6px;color:#f4f4f4;font-weight:700;">Pressure Drop</div><svg style="left:335.5px;top:505.5px;" width="14" height="14" viewBox="0 0 14 14"><circle cx="7" cy="7" r="6" fill="none" stroke="#e2e2e2" stroke-width="1.3"/><circle cx="7" cy="5.8" r="2.2" fill="#e2e2e2"/><path d="M3 11 Q7 7.5 11 11" fill="#e2e2e2" stroke="#e2e2e2" stroke-width="1.3"/></svg><div class="a" style="left:354px;top:502.29999999999995px;font-size:13px;color:#dcdcdc;font-weight:400;-webkit-text-stroke:0.2px #dcdcdc;">demo@kelvin.ai</div><div class="a" style="left:335px;top:525px;font-size:11.5px;color:#e2e2e2;font-weight:400;-webkit-text-stroke:0.2px #e2e2e2;letter-spacing:-0.4px">2026-01-31 09:48:13 to 2026-01-31 17:11:30</div><div class="b" style="left:0;top:0;width:1920px;height:1110.5px;overflow:hidden"><div class="b" style="left:308px;top:764px;width:1538px;height:53px;background:#bdbdbd;"></div><div class="b" style="left:308px;top:817px;width:1538px;height:1px;background:#c5c5c5;"></div><div class="b" style="left:558px;top:764px;width:1px;height:53px;background:#c3c3c3;"></div><div class="b" style="left:1747.5px;top:764px;width:1px;height:53px;background:#c3c3c3;"></div><svg style="left:330px;top:782px;" width="12" height="16" viewBox="0 0 12 16"><path d="M2 1.5 H10 L9 3 V7.5 L11 10.5 H1 L3 7.5 V3 Z" fill="#d6d6d6"/><path d="M6 10.5 V15.5" stroke="#d6d6d6" stroke-width="1.6" stroke-linecap="round"/></svg><div class="a" style="left:390px;top:771.0px;font-size:12.7px;color:#f6f6f6;font-weight:700;">Beam Pump #02</div><div class="a" style="left:390px;top:791.0px;font-size:13px;color:#dedede;font-weight:400;-webkit-text-stroke:0.2px #dedede;">beam_pump_02</div><div class="b" style="left:575.5px;top:784.0px;width:13.0px;height:13.0px;border-radius:50%;background:#a9d9c0"></div><svg style="left:575.5px;top:784.0px;" width="13.0" height="13.0" viewBox="0 0 13.0 13.0"><path d="M3.5 6.7 L5.7 8.8 L9.5 4.5" fill="none" stroke="#f4faf6" stroke-width="1.3" stroke-linecap="round"/></svg><div class="a" style="left:598px;top:780.5px;font-size:11.5px;color:#e8e8e8;font-weight:400;-webkit-text-stroke:0.2px #e8e8e8;">Connected</div><div class="a" style="left:721.5px;top:780.0px;font-size:13px;color:#f2f2f2;font-weight:400;-webkit-text-stroke:0.2px #f2f2f2;">BP Optimization, Speed Recommendations Data Quality</div><div class="a" style="left:1137px;top:771.0px;font-size:13.3px;color:#eeeeee;font-weight:400;-webkit-text-stroke:0.2px #eeeeee;">no_action</div><div class="b" style="left:1138.0px;top:795.0px;width:13.0px;height:13.0px;border-radius:50%;background:#a9d9c0"></div><svg style="left:1138.0px;top:795.0px;" width="13.0" height="13.0" viewBox="0 0 13.0 13.0"><path d="M3.5 6.7 L5.7 8.8 L9.5 4.5" fill="none" stroke="#f4faf6" stroke-width="1.3" stroke-linecap="round"/></svg><div class="a" style="left:1156px;top:791.5px;font-size:11.5px;color:#dcdcdc;font-weight:400;-webkit-text-stroke:0.2px #dcdcdc;">Accepted</div><div class="b" style="left:1314.5px;top:777.0px;width:81px;height:27px;background:none;border:1.3px solid #f0f0f0;border-radius:4px"></div><div class="a" style="left:1327.5px;top:780.5px;font-size:11px;color:#f6f6f6;font-weight:700;">View more</div><div class="a" style="left:1425px;top:780.0px;font-size:13px;color:#cbcbcb;font-weight:400;-webkit-text-stroke:0.2px #cbcbcb;">N/A</div><svg style="left:1767.5px;top:782px;" width="17" height="17" viewBox="0 0 17 17"><path d="M0.8 9.5 L3.3 9.5 L6.2 15 L9 2 L11.3 11 L13.5 6 L15.2 9.5" fill="none" stroke="#f6f6f6" stroke-width="1.8" stroke-linejoin="round" stroke-linecap="round"/></svg><svg style="left:1802px;top:782px;" width="18" height="17" viewBox="0 0 18 17"><path d="M5.5 1.8 Q1.6 3.6 1.8 7.6 Q2 10.6 4.6 12" fill="none" stroke="#f6f6f6" stroke-width="1.7"/><path d="M2.2 13.6 L7.4 13.8 L6.2 8.8 Z" fill="#f6f6f6"/><path d="M10.6 1.4 V5.2 M10.6 1.4 H14.4 M10.9 1.7 L15.2 6" fill="none" stroke="#f6f6f6" stroke-width="1.5"/><path d="M16.24 11.40 L17.45 11.37 L17.45 12.63 L16.24 12.60 L15.78 13.72 L16.65 14.56 L15.76 15.45 L14.92 14.58 L13.80 15.04 L13.83 16.25 L12.57 16.25 L12.60 15.04 L11.48 14.58 L10.64 15.45 L9.75 14.56 L10.62 13.72 L10.16 12.60 L8.95 12.63 L8.95 11.37 L10.16 11.40 L10.62 10.28 L9.75 9.44 L10.64 8.55 L11.48 9.42 L12.60 8.96 L12.57 7.75 L13.83 7.75 L13.80 8.96 L14.92 9.42 L15.76 8.55 L16.65 9.44 L15.78 10.28 Z" fill="#f6f6f6"/><circle cx="13.2" cy="12" r="1.2" fill="#bdbdbd"/></svg><div class="b" style="left:308px;top:817px;width:1538px;height:54px;background:#bdbdbd;"></div><div class="b" style="left:308px;top:871px;width:1538px;height:1px;background:#c5c5c5;"></div><div class="b" style="left:558px;top:817px;width:1px;height:54px;background:#c3c3c3;"></div><div class="b" style="left:1747.5px;top:817px;width:1px;height:54px;background:#c3c3c3;"></div><svg style="left:330px;top:836px;" width="12" height="16" viewBox="0 0 12 16"><path d="M2 1.5 H10 L9 3 V7.5 L11 10.5 H1 L3 7.5 V3 Z" fill="#d6d6d6"/><path d="M6 10.5 V15.5" stroke="#d6d6d6" stroke-width="1.6" stroke-linecap="round"/></svg><div class="a" style="left:390px;top:824.5px;font-size:12.7px;color:#f6f6f6;font-weight:700;">Beam Pump #03</div><div class="a" style="left:390px;top:844.5px;font-size:13px;color:#dedede;font-weight:400;-webkit-text-stroke:0.2px #dedede;">beam_pump_03</div><div class="b" style="left:575.5px;top:837.5px;width:13.0px;height:13.0px;border-radius:50%;background:#a9d9c0"></div><svg style="left:575.5px;top:837.5px;" width="13.0" height="13.0" viewBox="0 0 13.0 13.0"><path d="M3.5 6.7 L5.7 8.8 L9.5 4.5" fill="none" stroke="#f4faf6" stroke-width="1.3" stroke-linecap="round"/></svg><div class="a" style="left:598px;top:834.0px;font-size:11.5px;color:#e8e8e8;font-weight:400;-webkit-text-stroke:0.2px #e8e8e8;">Connected</div><div class="a" style="left:721.5px;top:833.5px;font-size:13px;color:#f2f2f2;font-weight:400;-webkit-text-stroke:0.2px #f2f2f2;">BP Optimization</div><div class="a" style="left:1137px;top:824.5px;font-size:13.3px;color:#eeeeee;font-weight:400;-webkit-text-stroke:0.2px #eeeeee;">no_action</div><div class="b" style="left:1138.0px;top:848.5px;width:13.0px;height:13.0px;border-radius:50%;background:#eedcae"></div><svg style="left:1138.0px;top:848.5px;" width="13.0" height="13.0" viewBox="0 0 13.0 13.0"><circle cx="3.9" cy="6.5" r="0.7" fill="#c9b88f"/><circle cx="6.5" cy="6.5" r="0.7" fill="#c9b88f"/><circle cx="9.1" cy="6.5" r="0.7" fill="#c9b88f"/></svg><div class="a" style="left:1156px;top:845.0px;font-size:11.5px;color:#dcdcdc;font-weight:400;-webkit-text-stroke:0.2px #dcdcdc;">Pending</div><div class="b" style="left:1314.5px;top:830.5px;width:81px;height:27px;background:none;border:1.3px solid #f0f0f0;border-radius:4px"></div><div class="a" style="left:1327.5px;top:834.0px;font-size:11px;color:#f6f6f6;font-weight:700;">View more</div><div class="a" style="left:1425px;top:833.5px;font-size:13px;color:#cbcbcb;font-weight:400;-webkit-text-stroke:0.2px #cbcbcb;">N/A</div><svg style="left:1767.5px;top:836px;" width="17" height="17" viewBox="0 0 17 17"><path d="M0.8 9.5 L3.3 9.5 L6.2 15 L9 2 L11.3 11 L13.5 6 L15.2 9.5" fill="none" stroke="#f6f6f6" stroke-width="1.8" stroke-linejoin="round" stroke-linecap="round"/></svg><svg style="left:1802px;top:836px;" width="18" height="17" viewBox="0 0 18 17"><path d="M5.5 1.8 Q1.6 3.6 1.8 7.6 Q2 10.6 4.6 12" fill="none" stroke="#f6f6f6" stroke-width="1.7"/><path d="M2.2 13.6 L7.4 13.8 L6.2 8.8 Z" fill="#f6f6f6"/><path d="M10.6 1.4 V5.2 M10.6 1.4 H14.4 M10.9 1.7 L15.2 6" fill="none" stroke="#f6f6f6" stroke-width="1.5"/><path d="M16.24 11.40 L17.45 11.37 L17.45 12.63 L16.24 12.60 L15.78 13.72 L16.65 14.56 L15.76 15.45 L14.92 14.58 L13.80 15.04 L13.83 16.25 L12.57 16.25 L12.60 15.04 L11.48 14.58 L10.64 15.45 L9.75 14.56 L10.62 13.72 L10.16 12.60 L8.95 12.63 L8.95 11.37 L10.16 11.40 L10.62 10.28 L9.75 9.44 L10.64 8.55 L11.48 9.42 L12.60 8.96 L12.57 7.75 L13.83 7.75 L13.80 8.96 L14.92 9.42 L15.76 8.55 L16.65 9.44 L15.78 10.28 Z" fill="#f6f6f6"/><circle cx="13.2" cy="12" r="1.2" fill="#bdbdbd"/></svg><div class="b" style="left:308px;top:871px;width:1538px;height:54px;background:#bdbdbd;"></div><div class="b" style="left:308px;top:925px;width:1538px;height:1px;background:#c5c5c5;"></div><div class="b" style="left:558px;top:871px;width:1px;height:54px;background:#c3c3c3;"></div><div class="b" style="left:1747.5px;top:871px;width:1px;height:54px;background:#c3c3c3;"></div><svg style="left:330px;top:890px;" width="12" height="16" viewBox="0 0 12 16"><path d="M2 1.5 H10 L9 3 V7.5 L11 10.5 H1 L3 7.5 V3 Z" fill="#d6d6d6"/><path d="M6 10.5 V15.5" stroke="#d6d6d6" stroke-width="1.6" stroke-linecap="round"/></svg><div class="a" style="left:390px;top:878.5px;font-size:12.7px;color:#f6f6f6;font-weight:700;">Beam Pump #04</div><div class="a" style="left:390px;top:898.5px;font-size:13px;color:#dedede;font-weight:400;-webkit-text-stroke:0.2px #dedede;">beam_pump_04</div><div class="b" style="left:575.5px;top:891.5px;width:13.0px;height:13.0px;border-radius:50%;background:#a9d9c0"></div><svg style="left:575.5px;top:891.5px;" width="13.0" height="13.0" viewBox="0 0 13.0 13.0"><path d="M3.5 6.7 L5.7 8.8 L9.5 4.5" fill="none" stroke="#f4faf6" stroke-width="1.3" stroke-linecap="round"/></svg><div class="a" style="left:598px;top:888.0px;font-size:11.5px;color:#e8e8e8;font-weight:400;-webkit-text-stroke:0.2px #e8e8e8;">Connected</div><div class="a" style="left:721.5px;top:887.5px;font-size:13px;color:#f2f2f2;font-weight:400;-webkit-text-stroke:0.2px #f2f2f2;">BP Optimization</div><div class="a" style="left:1137px;top:878.5px;font-size:13.3px;color:#eeeeee;font-weight:400;-webkit-text-stroke:0.2px #eeeeee;">increase_speed</div><div class="b" style="left:1138.0px;top:902.5px;width:13.0px;height:13.0px;border-radius:50%;background:#eedcae"></div><svg style="left:1138.0px;top:902.5px;" width="13.0" height="13.0" viewBox="0 0 13.0 13.0"><circle cx="3.9" cy="6.5" r="0.7" fill="#c9b88f"/><circle cx="6.5" cy="6.5" r="0.7" fill="#c9b88f"/><circle cx="9.1" cy="6.5" r="0.7" fill="#c9b88f"/></svg><div class="a" style="left:1156px;top:899.0px;font-size:11.5px;color:#dcdcdc;font-weight:400;-webkit-text-stroke:0.2px #dcdcdc;">Pending</div><div class="b" style="left:1314.5px;top:884.5px;width:81px;height:27px;background:none;border:1.3px solid #f0f0f0;border-radius:4px"></div><div class="a" style="left:1327.5px;top:888.0px;font-size:11px;color:#f6f6f6;font-weight:700;">View more</div><div class="a" style="left:1425px;top:887.5px;font-size:13px;color:#cbcbcb;font-weight:400;-webkit-text-stroke:0.2px #cbcbcb;">N/A</div><svg style="left:1767.5px;top:890px;" width="17" height="17" viewBox="0 0 17 17"><path d="M0.8 9.5 L3.3 9.5 L6.2 15 L9 2 L11.3 11 L13.5 6 L15.2 9.5" fill="none" stroke="#f6f6f6" stroke-width="1.8" stroke-linejoin="round" stroke-linecap="round"/></svg><svg style="left:1802px;top:890px;" width="18" height="17" viewBox="0 0 18 17"><path d="M5.5 1.8 Q1.6 3.6 1.8 7.6 Q2 10.6 4.6 12" fill="none" stroke="#f6f6f6" stroke-width="1.7"/><path d="M2.2 13.6 L7.4 13.8 L6.2 8.8 Z" fill="#f6f6f6"/><path d="M10.6 1.4 V5.2 M10.6 1.4 H14.4 M10.9 1.7 L15.2 6" fill="none" stroke="#f6f6f6" stroke-width="1.5"/><path d="M16.24 11.40 L17.45 11.37 L17.45 12.63 L16.24 12.60 L15.78 13.72 L16.65 14.56 L15.76 15.45 L14.92 14.58 L13.80 15.04 L13.83 16.25 L12.57 16.25 L12.60 15.04 L11.48 14.58 L10.64 15.45 L9.75 14.56 L10.62 13.72 L10.16 12.60 L8.95 12.63 L8.95 11.37 L10.16 11.40 L10.62 10.28 L9.75 9.44 L10.64 8.55 L11.48 9.42 L12.60 8.96 L12.57 7.75 L13.83 7.75 L13.80 8.96 L14.92 9.42 L15.76 8.55 L16.65 9.44 L15.78 10.28 Z" fill="#f6f6f6"/><circle cx="13.2" cy="12" r="1.2" fill="#bdbdbd"/></svg><div class="b" style="left:308px;top:925px;width:1538px;height:54px;background:#bdbdbd;"></div><div class="b" style="left:308px;top:979px;width:1538px;height:1px;background:#c5c5c5;"></div><div class="b" style="left:558px;top:925px;width:1px;height:54px;background:#c3c3c3;"></div><div class="b" style="left:1747.5px;top:925px;width:1px;height:54px;background:#c3c3c3;"></div><svg style="left:330px;top:944px;" width="12" height="16" viewBox="0 0 12 16"><path d="M2 1.5 H10 L9 3 V7.5 L11 10.5 H1 L3 7.5 V3 Z" fill="#d6d6d6"/><path d="M6 10.5 V15.5" stroke="#d6d6d6" stroke-width="1.6" stroke-linecap="round"/></svg><div class="a" style="left:390px;top:932.5px;font-size:12.7px;color:#f6f6f6;font-weight:700;">Beam Pump #05</div><div class="a" style="left:390px;top:952.5px;font-size:13px;color:#dedede;font-weight:400;-webkit-text-stroke:0.2px #dedede;">beam_pump_05</div><div class="b" style="left:575.5px;top:945.5px;width:13.0px;height:13.0px;border-radius:50%;background:#a9d9c0"></div><svg style="left:575.5px;top:945.5px;" width="13.0" height="13.0" viewBox="0 0 13.0 13.0"><path d="M3.5 6.7 L5.7 8.8 L9.5 4.5" fill="none" stroke="#f4faf6" stroke-width="1.3" stroke-linecap="round"/></svg><div class="a" style="left:598px;top:942.0px;font-size:11.5px;color:#e8e8e8;font-weight:400;-webkit-text-stroke:0.2px #e8e8e8;">Connected</div><div class="a" style="left:721.5px;top:941.5px;font-size:13px;color:#f2f2f2;font-weight:400;-webkit-text-stroke:0.2px #f2f2f2;">BP Optimization</div><div class="a" style="left:1137px;top:932.5px;font-size:13.3px;color:#eeeeee;font-weight:400;-webkit-text-stroke:0.2px #eeeeee;">no_action</div><div class="b" style="left:1138.0px;top:956.5px;width:13.0px;height:13.0px;border-radius:50%;background:#eedcae"></div><svg style="left:1138.0px;top:956.5px;" width="13.0" height="13.0" viewBox="0 0 13.0 13.0"><circle cx="3.9" cy="6.5" r="0.7" fill="#c9b88f"/><circle cx="6.5" cy="6.5" r="0.7" fill="#c9b88f"/><circle cx="9.1" cy="6.5" r="0.7" fill="#c9b88f"/></svg><div class="a" style="left:1156px;top:953.0px;font-size:11.5px;color:#dcdcdc;font-weight:400;-webkit-text-stroke:0.2px #dcdcdc;">Pending</div><div class="b" style="left:1314.5px;top:938.5px;width:81px;height:27px;background:none;border:1.3px solid #f0f0f0;border-radius:4px"></div><div class="a" style="left:1327.5px;top:942.0px;font-size:11px;color:#f6f6f6;font-weight:700;">View more</div><div class="a" style="left:1425px;top:941.5px;font-size:13px;color:#cbcbcb;font-weight:400;-webkit-text-stroke:0.2px #cbcbcb;">N/A</div><svg style="left:1767.5px;top:944px;" width="17" height="17" viewBox="0 0 17 17"><path d="M0.8 9.5 L3.3 9.5 L6.2 15 L9 2 L11.3 11 L13.5 6 L15.2 9.5" fill="none" stroke="#f6f6f6" stroke-width="1.8" stroke-linejoin="round" stroke-linecap="round"/></svg><svg style="left:1802px;top:944px;" width="18" height="17" viewBox="0 0 18 17"><path d="M5.5 1.8 Q1.6 3.6 1.8 7.6 Q2 10.6 4.6 12" fill="none" stroke="#f6f6f6" stroke-width="1.7"/><path d="M2.2 13.6 L7.4 13.8 L6.2 8.8 Z" fill="#f6f6f6"/><path d="M10.6 1.4 V5.2 M10.6 1.4 H14.4 M10.9 1.7 L15.2 6" fill="none" stroke="#f6f6f6" stroke-width="1.5"/><path d="M16.24 11.40 L17.45 11.37 L17.45 12.63 L16.24 12.60 L15.78 13.72 L16.65 14.56 L15.76 15.45 L14.92 14.58 L13.80 15.04 L13.83 16.25 L12.57 16.25 L12.60 15.04 L11.48 14.58 L10.64 15.45 L9.75 14.56 L10.62 13.72 L10.16 12.60 L8.95 12.63 L8.95 11.37 L10.16 11.40 L10.62 10.28 L9.75 9.44 L10.64 8.55 L11.48 9.42 L12.60 8.96 L12.57 7.75 L13.83 7.75 L13.80 8.96 L14.92 9.42 L15.76 8.55 L16.65 9.44 L15.78 10.28 Z" fill="#f6f6f6"/><circle cx="13.2" cy="12" r="1.2" fill="#bdbdbd"/></svg><div class="b" style="left:308px;top:979px;width:1538px;height:53px;background:#bdbdbd;"></div><div class="b" style="left:308px;top:1032px;width:1538px;height:1px;background:#c5c5c5;"></div><div class="b" style="left:558px;top:979px;width:1px;height:53px;background:#c3c3c3;"></div><div class="b" style="left:1747.5px;top:979px;width:1px;height:53px;background:#c3c3c3;"></div><svg style="left:330px;top:998px;" width="12" height="16" viewBox="0 0 12 16"><path d="M2 1.5 H10 L9 3 V7.5 L11 10.5 H1 L3 7.5 V3 Z" fill="#d6d6d6"/><path d="M6 10.5 V15.5" stroke="#d6d6d6" stroke-width="1.6" stroke-linecap="round"/></svg><div class="a" style="left:390px;top:986.0px;font-size:12.7px;color:#f6f6f6;font-weight:700;">Beam Pump #06</div><div class="a" style="left:390px;top:1006.0px;font-size:13px;color:#dedede;font-weight:400;-webkit-text-stroke:0.2px #dedede;">beam_pump_06</div><div class="b" style="left:575.5px;top:999.0px;width:13.0px;height:13.0px;border-radius:50%;background:#a9d9c0"></div><svg style="left:575.5px;top:999.0px;" width="13.0" height="13.0" viewBox="0 0 13.0 13.0"><path d="M3.5 6.7 L5.7 8.8 L9.5 4.5" fill="none" stroke="#f4faf6" stroke-width="1.3" stroke-linecap="round"/></svg><div class="a" style="left:598px;top:995.5px;font-size:11.5px;color:#e8e8e8;font-weight:400;-webkit-text-stroke:0.2px #e8e8e8;">Connected</div><div class="a" style="left:721.5px;top:995.0px;font-size:13px;color:#f2f2f2;font-weight:400;-webkit-text-stroke:0.2px #f2f2f2;">BP Optimization</div><div class="a" style="left:1137px;top:986.0px;font-size:13.3px;color:#eeeeee;font-weight:400;-webkit-text-stroke:0.2px #eeeeee;">increase_speed</div><div class="b" style="left:1138.0px;top:1010.0px;width:13.0px;height:13.0px;border-radius:50%;background:#eedcae"></div><svg style="left:1138.0px;top:1010.0px;" width="13.0" height="13.0" viewBox="0 0 13.0 13.0"><circle cx="3.9" cy="6.5" r="0.7" fill="#c9b88f"/><circle cx="6.5" cy="6.5" r="0.7" fill="#c9b88f"/><circle cx="9.1" cy="6.5" r="0.7" fill="#c9b88f"/></svg><div class="a" style="left:1156px;top:1006.5px;font-size:11.5px;color:#dcdcdc;font-weight:400;-webkit-text-stroke:0.2px #dcdcdc;">Pending</div><div class="b" style="left:1314.5px;top:992.0px;width:81px;height:27px;background:none;border:1.3px solid #f0f0f0;border-radius:4px"></div><div class="a" style="left:1327.5px;top:995.5px;font-size:11px;color:#f6f6f6;font-weight:700;">View more</div><div class="a" style="left:1425px;top:995.0px;font-size:13px;color:#cbcbcb;font-weight:400;-webkit-text-stroke:0.2px #cbcbcb;">N/A</div><svg style="left:1767.5px;top:998px;" width="17" height="17" viewBox="0 0 17 17"><path d="M0.8 9.5 L3.3 9.5 L6.2 15 L9 2 L11.3 11 L13.5 6 L15.2 9.5" fill="none" stroke="#f6f6f6" stroke-width="1.8" stroke-linejoin="round" stroke-linecap="round"/></svg><svg style="left:1802px;top:998px;" width="18" height="17" viewBox="0 0 18 17"><path d="M5.5 1.8 Q1.6 3.6 1.8 7.6 Q2 10.6 4.6 12" fill="none" stroke="#f6f6f6" stroke-width="1.7"/><path d="M2.2 13.6 L7.4 13.8 L6.2 8.8 Z" fill="#f6f6f6"/><path d="M10.6 1.4 V5.2 M10.6 1.4 H14.4 M10.9 1.7 L15.2 6" fill="none" stroke="#f6f6f6" stroke-width="1.5"/><path d="M16.24 11.40 L17.45 11.37 L17.45 12.63 L16.24 12.60 L15.78 13.72 L16.65 14.56 L15.76 15.45 L14.92 14.58 L13.80 15.04 L13.83 16.25 L12.57 16.25 L12.60 15.04 L11.48 14.58 L10.64 15.45 L9.75 14.56 L10.62 13.72 L10.16 12.60 L8.95 12.63 L8.95 11.37 L10.16 11.40 L10.62 10.28 L9.75 9.44 L10.64 8.55 L11.48 9.42 L12.60 8.96 L12.57 7.75 L13.83 7.75 L13.80 8.96 L14.92 9.42 L15.76 8.55 L16.65 9.44 L15.78 10.28 Z" fill="#f6f6f6"/><circle cx="13.2" cy="12" r="1.2" fill="#bdbdbd"/></svg><div class="b" style="left:308px;top:1032px;width:1538px;height:54px;background:#bdbdbd;"></div><div class="b" style="left:308px;top:1086px;width:1538px;height:1px;background:#c5c5c5;"></div><div class="b" style="left:558px;top:1032px;width:1px;height:54px;background:#c3c3c3;"></div><div class="b" style="left:1747.5px;top:1032px;width:1px;height:54px;background:#c3c3c3;"></div><svg style="left:330px;top:1051px;" width="12" height="16" viewBox="0 0 12 16"><path d="M2 1.5 H10 L9 3 V7.5 L11 10.5 H1 L3 7.5 V3 Z" fill="#d6d6d6"/><path d="M6 10.5 V15.5" stroke="#d6d6d6" stroke-width="1.6" stroke-linecap="round"/></svg><div class="a" style="left:390px;top:1039.5px;font-size:12.7px;color:#f6f6f6;font-weight:700;">Beam Pump #07</div><div class="a" style="left:390px;top:1059.5px;font-size:13px;color:#dedede;font-weight:400;-webkit-text-stroke:0.2px #dedede;">beam_pump_07</div><div class="b" style="left:575.5px;top:1052.5px;width:13.0px;height:13.0px;border-radius:50%;background:#a9d9c0"></div><svg style="left:575.5px;top:1052.5px;" width="13.0" height="13.0" viewBox="0 0 13.0 13.0"><path d="M3.5 6.7 L5.7 8.8 L9.5 4.5" fill="none" stroke="#f4faf6" stroke-width="1.3" stroke-linecap="round"/></svg><div class="a" style="left:598px;top:1049.0px;font-size:11.5px;color:#e8e8e8;font-weight:400;-webkit-text-stroke:0.2px #e8e8e8;">Connected</div><div class="a" style="left:721.5px;top:1048.5px;font-size:13px;color:#f2f2f2;font-weight:400;-webkit-text-stroke:0.2px #f2f2f2;">BP Optimization</div><div class="a" style="left:1137px;top:1039.5px;font-size:13.3px;color:#eeeeee;font-weight:400;-webkit-text-stroke:0.2px #eeeeee;">decrease_speed</div><div class="b" style="left:1138.0px;top:1063.5px;width:13.0px;height:13.0px;border-radius:50%;background:#eedcae"></div><svg style="left:1138.0px;top:1063.5px;" width="13.0" height="13.0" viewBox="0 0 13.0 13.0"><circle cx="3.9" cy="6.5" r="0.7" fill="#c9b88f"/><circle cx="6.5" cy="6.5" r="0.7" fill="#c9b88f"/><circle cx="9.1" cy="6.5" r="0.7" fill="#c9b88f"/></svg><div class="a" style="left:1156px;top:1060.0px;font-size:11.5px;color:#dcdcdc;font-weight:400;-webkit-text-stroke:0.2px #dcdcdc;">Pending</div><div class="b" style="left:1314.5px;top:1045.5px;width:81px;height:27px;background:none;border:1.3px solid #f0f0f0;border-radius:4px"></div><div class="a" style="left:1327.5px;top:1049.0px;font-size:11px;color:#f6f6f6;font-weight:700;">View more</div><div class="a" style="left:1425px;top:1048.5px;font-size:13px;color:#cbcbcb;font-weight:400;-webkit-text-stroke:0.2px #cbcbcb;">N/A</div><svg style="left:1767.5px;top:1051px;" width="17" height="17" viewBox="0 0 17 17"><path d="M0.8 9.5 L3.3 9.5 L6.2 15 L9 2 L11.3 11 L13.5 6 L15.2 9.5" fill="none" stroke="#f6f6f6" stroke-width="1.8" stroke-linejoin="round" stroke-linecap="round"/></svg><svg style="left:1802px;top:1051px;" width="18" height="17" viewBox="0 0 18 17"><path d="M5.5 1.8 Q1.6 3.6 1.8 7.6 Q2 10.6 4.6 12" fill="none" stroke="#f6f6f6" stroke-width="1.7"/><path d="M2.2 13.6 L7.4 13.8 L6.2 8.8 Z" fill="#f6f6f6"/><path d="M10.6 1.4 V5.2 M10.6 1.4 H14.4 M10.9 1.7 L15.2 6" fill="none" stroke="#f6f6f6" stroke-width="1.5"/><path d="M16.24 11.40 L17.45 11.37 L17.45 12.63 L16.24 12.60 L15.78 13.72 L16.65 14.56 L15.76 15.45 L14.92 14.58 L13.80 15.04 L13.83 16.25 L12.57 16.25 L12.60 15.04 L11.48 14.58 L10.64 15.45 L9.75 14.56 L10.62 13.72 L10.16 12.60 L8.95 12.63 L8.95 11.37 L10.16 11.40 L10.62 10.28 L9.75 9.44 L10.64 8.55 L11.48 9.42 L12.60 8.96 L12.57 7.75 L13.83 7.75 L13.80 8.96 L14.92 9.42 L15.76 8.55 L16.65 9.44 L15.78 10.28 Z" fill="#f6f6f6"/><circle cx="13.2" cy="12" r="1.2" fill="#bdbdbd"/></svg><div class="b" style="left:308px;top:1086px;width:1538px;height:54px;background:#bdbdbd;"></div><div class="b" style="left:308px;top:1140px;width:1538px;height:1px;background:#c5c5c5;"></div><div class="b" style="left:558px;top:1086px;width:1px;height:54px;background:#c3c3c3;"></div><div class="b" style="left:1747.5px;top:1086px;width:1px;height:54px;background:#c3c3c3;"></div><svg style="left:330px;top:1105px;" width="12" height="16" viewBox="0 0 12 16"><path d="M2 1.5 H10 L9 3 V7.5 L11 10.5 H1 L3 7.5 V3 Z" fill="#d6d6d6"/><path d="M6 10.5 V15.5" stroke="#d6d6d6" stroke-width="1.6" stroke-linecap="round"/></svg><div class="a" style="left:390px;top:1093.5px;font-size:12.7px;color:#f6f6f6;font-weight:700;">Beam Pump #08</div><div class="a" style="left:390px;top:1113.5px;font-size:13px;color:#dedede;font-weight:400;-webkit-text-stroke:0.2px #dedede;">beam_pump_08</div><div class="b" style="left:575.5px;top:1106.5px;width:13.0px;height:13.0px;border-radius:50%;background:#a9d9c0"></div><svg style="left:575.5px;top:1106.5px;" width="13.0" height="13.0" viewBox="0 0 13.0 13.0"><path d="M3.5 6.7 L5.7 8.8 L9.5 4.5" fill="none" stroke="#f4faf6" stroke-width="1.3" stroke-linecap="round"/></svg><div class="a" style="left:598px;top:1103.0px;font-size:11.5px;color:#e8e8e8;font-weight:400;-webkit-text-stroke:0.2px #e8e8e8;">Connected</div><div class="a" style="left:721.5px;top:1102.5px;font-size:13px;color:#f2f2f2;font-weight:400;-webkit-text-stroke:0.2px #f2f2f2;">BP Optimization</div><div class="a" style="left:1137px;top:1093.5px;font-size:13.3px;color:#eeeeee;font-weight:400;-webkit-text-stroke:0.2px #eeeeee;">decrease_speed</div><div class="b" style="left:1138.0px;top:1117.5px;width:13.0px;height:13.0px;border-radius:50%;background:#eedcae"></div><svg style="left:1138.0px;top:1117.5px;" width="13.0" height="13.0" viewBox="0 0 13.0 13.0"><circle cx="3.9" cy="6.5" r="0.7" fill="#c9b88f"/><circle cx="6.5" cy="6.5" r="0.7" fill="#c9b88f"/><circle cx="9.1" cy="6.5" r="0.7" fill="#c9b88f"/></svg><div class="a" style="left:1156px;top:1114.0px;font-size:11.5px;color:#dcdcdc;font-weight:400;-webkit-text-stroke:0.2px #dcdcdc;">Pending</div><div class="b" style="left:1314.5px;top:1099.5px;width:81px;height:27px;background:none;border:1.3px solid #f0f0f0;border-radius:4px"></div><div class="a" style="left:1327.5px;top:1103.0px;font-size:11px;color:#f6f6f6;font-weight:700;">View more</div><div class="a" style="left:1425px;top:1102.5px;font-size:13px;color:#cbcbcb;font-weight:400;-webkit-text-stroke:0.2px #cbcbcb;">N/A</div><svg style="left:1767.5px;top:1105px;" width="17" height="17" viewBox="0 0 17 17"><path d="M0.8 9.5 L3.3 9.5 L6.2 15 L9 2 L11.3 11 L13.5 6 L15.2 9.5" fill="none" stroke="#f6f6f6" stroke-width="1.8" stroke-linejoin="round" stroke-linecap="round"/></svg><svg style="left:1802px;top:1105px;" width="18" height="17" viewBox="0 0 18 17"><path d="M5.5 1.8 Q1.6 3.6 1.8 7.6 Q2 10.6 4.6 12" fill="none" stroke="#f6f6f6" stroke-width="1.7"/><path d="M2.2 13.6 L7.4 13.8 L6.2 8.8 Z" fill="#f6f6f6"/><path d="M10.6 1.4 V5.2 M10.6 1.4 H14.4 M10.9 1.7 L15.2 6" fill="none" stroke="#f6f6f6" stroke-width="1.5"/><path d="M16.24 11.40 L17.45 11.37 L17.45 12.63 L16.24 12.60 L15.78 13.72 L16.65 14.56 L15.76 15.45 L14.92 14.58 L13.80 15.04 L13.83 16.25 L12.57 16.25 L12.60 15.04 L11.48 14.58 L10.64 15.45 L9.75 14.56 L10.62 13.72 L10.16 12.60 L8.95 12.63 L8.95 11.37 L10.16 11.40 L10.62 10.28 L9.75 9.44 L10.64 8.55 L11.48 9.42 L12.60 8.96 L12.57 7.75 L13.83 7.75 L13.80 8.96 L14.92 9.42 L15.76 8.55 L16.65 9.44 L15.78 10.28 Z" fill="#f6f6f6"/><circle cx="13.2" cy="12" r="1.2" fill="#bdbdbd"/></svg></div><div class="a" style="left:308px;top:1130px;font-size:13px;color:#e8e8e8;font-weight:400;-webkit-text-stroke:0.2px #e8e8e8;">Show</div><div class="b" style="left:348px;top:1126px;width:95.5px;height:26.5px;background:#c3c3c3;border-radius:4px"></div><div class="a" style="left:359px;top:1129.5px;font-size:13px;color:#e2e2e2;font-weight:400;-webkit-text-stroke:0.2px #e2e2e2;">32 items</div><svg style="left:420px;top:1135px;" width="10" height="8" viewBox="0 0 10 8"><path d="M1 1.5 H9 L5 5.5 Z" fill="#ececec"/></svg><div class="a" style="left:452px;top:1130px;font-size:13px;color:#e2e2e2;font-weight:400;-webkit-text-stroke:0.2px #e2e2e2;">per page</div><div class="a" style="left:1465px;top:1130px;font-size:13px;color:#e6e6e6;font-weight:400;-webkit-text-stroke:0.2px #e6e6e6;">Showing 1 to 32 items of 361</div><svg style="left:1654.5px;top:1133px;" width="12" height="14" viewBox="0 0 12 14"><path d="M6.0 2.5 L1.5 7 L6.0 11.5" fill="none" stroke="#d4d4d4" stroke-width="1.5"/><path d="M11.0 2.5 L6.5 7 L11.0 11.5" fill="none" stroke="#d4d4d4" stroke-width="1.5"/></svg><svg style="left:1685px;top:1133px;" width="12" height="14" viewBox="0 0 12 14"><path d="M8.5 2.5 L4 7 L8.5 11.5" fill="none" stroke="#d4d4d4" stroke-width="1.5"/></svg><div class="a" style="left:1717.5px;top:1130px;font-size:13px;color:#f6f6f6;font-weight:700;">1</div><div class="a" style="left:1748px;top:1130px;font-size:13px;color:#e6e6e6;font-weight:400;-webkit-text-stroke:0.2px #e6e6e6;">2</div><div class="a" style="left:1778.5px;top:1130px;font-size:13px;color:#e6e6e6;font-weight:400;-webkit-text-stroke:0.2px #e6e6e6;">3</div><svg style="left:1808px;top:1133px;" width="12" height="14" viewBox="0 0 12 14"><path d="M3.5 2.5 L8 7 L3.5 11.5" fill="none" stroke="#f2f2f2" stroke-width="1.5"/></svg><svg style="left:1838px;top:1133px;" width="12" height="14" viewBox="0 0 12 14"><path d="M1.0 2.5 L5.5 7 L1.0 11.5" fill="none" stroke="#f2f2f2" stroke-width="1.5"/><path d="M6.0 2.5 L10.5 7 L6.0 11.5" fill="none" stroke="#f2f2f2" stroke-width="1.5"/></svg><svg style="left:740px;top:407px;" width="16" height="16" viewBox="0 0 16 16"><path d="M1.5 3 Q1.5 1.5 3 1.5 H7.5 L14.5 8.5 Q15.2 9.2 14.5 9.9 L9.9 14.5 Q9.2 15.2 8.5 14.5 L1.5 7.5 Z" fill="#f6f6f6" transform="rotate(0 8 8)"/><circle cx="4.6" cy="4.6" r="1.3" fill="#bbbbbb"/></svg><svg style="left:757px;top:414px;" width="174" height="3" viewBox="0 0 174 3"><circle cx="1.0" cy="1.5" r="0.75" fill="#e6e6e6"/><circle cx="4.1" cy="1.5" r="0.75" fill="#e6e6e6"/><circle cx="7.2" cy="1.5" r="0.75" fill="#e6e6e6"/><circle cx="10.3" cy="1.5" r="0.75" fill="#e6e6e6"/><circle cx="13.4" cy="1.5" r="0.75" fill="#e6e6e6"/><circle cx="16.5" cy="1.5" r="0.75" fill="#e6e6e6"/><circle cx="19.6" cy="1.5" r="0.75" fill="#e6e6e6"/><circle cx="22.7" cy="1.5" r="0.75" fill="#e6e6e6"/><circle cx="25.8" cy="1.5" r="0.75" fill="#e6e6e6"/><circle cx="28.900000000000002" cy="1.5" r="0.75" fill="#e6e6e6"/><circle cx="32.0" cy="1.5" r="0.75" fill="#e6e6e6"/><circle cx="35.1" cy="1.5" r="0.75" fill="#e6e6e6"/><circle cx="38.2" cy="1.5" r="0.75" fill="#e6e6e6"/><circle cx="41.300000000000004" cy="1.5" r="0.75" fill="#e6e6e6"/><circle cx="44.4" cy="1.5" r="0.75" fill="#e6e6e6"/><circle cx="47.5" cy="1.5" r="0.75" fill="#e6e6e6"/><circle cx="50.6" cy="1.5" r="0.75" fill="#e6e6e6"/><circle cx="53.7" cy="1.5" r="0.75" fill="#e6e6e6"/><circle cx="56.800000000000004" cy="1.5" r="0.75" fill="#e6e6e6"/><circle cx="59.9" cy="1.5" r="0.75" fill="#e6e6e6"/><circle cx="63.0" cy="1.5" r="0.75" fill="#e6e6e6"/><circle cx="66.10000000000001" cy="1.5" r="0.75" fill="#e6e6e6"/><circle cx="69.2" cy="1.5" r="0.75" fill="#e6e6e6"/><circle cx="72.3" cy="1.5" r="0.75" fill="#e6e6e6"/><circle cx="75.4" cy="1.5" r="0.75" fill="#e6e6e6"/><circle cx="78.5" cy="1.5" r="0.75" fill="#e6e6e6"/><circle cx="81.60000000000001" cy="1.5" r="0.75" fill="#e6e6e6"/><circle cx="84.7" cy="1.5" r="0.75" fill="#e6e6e6"/><circle cx="87.8" cy="1.5" r="0.75" fill="#e6e6e6"/><circle cx="90.9" cy="1.5" r="0.75" fill="#e6e6e6"/><circle cx="94.0" cy="1.5" r="0.75" fill="#e6e6e6"/><circle cx="97.10000000000001" cy="1.5" r="0.75" fill="#e6e6e6"/><circle cx="100.2" cy="1.5" r="0.75" fill="#e6e6e6"/><circle cx="103.3" cy="1.5" r="0.75" fill="#e6e6e6"/><circle cx="106.4" cy="1.5" r="0.75" fill="#e6e6e6"/><circle cx="109.5" cy="1.5" r="0.75" fill="#e6e6e6"/><circle cx="112.60000000000001" cy="1.5" r="0.75" fill="#e6e6e6"/><circle cx="115.7" cy="1.5" r="0.75" fill="#e6e6e6"/><circle cx="118.8" cy="1.5" r="0.75" fill="#e6e6e6"/><circle cx="121.9" cy="1.5" r="0.75" fill="#e6e6e6"/><circle cx="125.0" cy="1.5" r="0.75" fill="#e6e6e6"/><circle cx="128.10000000000002" cy="1.5" r="0.75" fill="#e6e6e6"/><circle cx="131.20000000000002" cy="1.5" r="0.75" fill="#e6e6e6"/><circle cx="134.3" cy="1.5" r="0.75" fill="#e6e6e6"/><circle cx="137.4" cy="1.5" r="0.75" fill="#e6e6e6"/><circle cx="140.5" cy="1.5" r="0.75" fill="#e6e6e6"/><circle cx="143.6" cy="1.5" r="0.75" fill="#e6e6e6"/><circle cx="146.70000000000002" cy="1.5" r="0.75" fill="#e6e6e6"/><circle cx="149.8" cy="1.5" r="0.75" fill="#e6e6e6"/><circle cx="152.9" cy="1.5" r="0.75" fill="#e6e6e6"/><circle cx="156.0" cy="1.5" r="0.75" fill="#e6e6e6"/><circle cx="159.1" cy="1.5" r="0.75" fill="#e6e6e6"/><circle cx="162.20000000000002" cy="1.5" r="0.75" fill="#e6e6e6"/><circle cx="165.3" cy="1.5" r="0.75" fill="#e6e6e6"/><circle cx="168.4" cy="1.5" r="0.75" fill="#e6e6e6"/><circle cx="171.5" cy="1.5" r="0.75" fill="#e6e6e6"/></svg><div class="b" style="left:931px;top:410px;width:699px;height:11.5px;background:#cec6ec;border-radius:3px"></div><svg style="left:1631px;top:414.5px;" width="174" height="3" viewBox="0 0 174 3"><circle cx="2.0" cy="1.5" r="0.75" fill="#e6e6e6"/><circle cx="5.1" cy="1.5" r="0.75" fill="#e6e6e6"/><circle cx="8.2" cy="1.5" r="0.75" fill="#e6e6e6"/><circle cx="11.3" cy="1.5" r="0.75" fill="#e6e6e6"/><circle cx="14.4" cy="1.5" r="0.75" fill="#e6e6e6"/><circle cx="17.5" cy="1.5" r="0.75" fill="#e6e6e6"/><circle cx="20.6" cy="1.5" r="0.75" fill="#e6e6e6"/><circle cx="23.7" cy="1.5" r="0.75" fill="#e6e6e6"/><circle cx="26.8" cy="1.5" r="0.75" fill="#e6e6e6"/><circle cx="29.900000000000002" cy="1.5" r="0.75" fill="#e6e6e6"/><circle cx="33.0" cy="1.5" r="0.75" fill="#e6e6e6"/><circle cx="36.1" cy="1.5" r="0.75" fill="#e6e6e6"/><circle cx="39.2" cy="1.5" r="0.75" fill="#e6e6e6"/><circle cx="42.300000000000004" cy="1.5" r="0.75" fill="#e6e6e6"/><circle cx="45.4" cy="1.5" r="0.75" fill="#e6e6e6"/><circle cx="48.5" cy="1.5" r="0.75" fill="#e6e6e6"/><circle cx="51.6" cy="1.5" r="0.75" fill="#e6e6e6"/><circle cx="54.7" cy="1.5" r="0.75" fill="#e6e6e6"/><circle cx="57.800000000000004" cy="1.5" r="0.75" fill="#e6e6e6"/><circle cx="60.9" cy="1.5" r="0.75" fill="#e6e6e6"/><circle cx="64.0" cy="1.5" r="0.75" fill="#e6e6e6"/><circle cx="67.10000000000001" cy="1.5" r="0.75" fill="#e6e6e6"/><circle cx="70.2" cy="1.5" r="0.75" fill="#e6e6e6"/><circle cx="73.3" cy="1.5" r="0.75" fill="#e6e6e6"/><circle cx="76.4" cy="1.5" r="0.75" fill="#e6e6e6"/><circle cx="79.5" cy="1.5" r="0.75" fill="#e6e6e6"/><circle cx="82.60000000000001" cy="1.5" r="0.75" fill="#e6e6e6"/><circle cx="85.7" cy="1.5" r="0.75" fill="#e6e6e6"/><circle cx="88.8" cy="1.5" r="0.75" fill="#e6e6e6"/><circle cx="91.9" cy="1.5" r="0.75" fill="#e6e6e6"/><circle cx="95.0" cy="1.5" r="0.75" fill="#e6e6e6"/><circle cx="98.10000000000001" cy="1.5" r="0.75" fill="#e6e6e6"/><circle cx="101.2" cy="1.5" r="0.75" fill="#e6e6e6"/><circle cx="104.3" cy="1.5" r="0.75" fill="#e6e6e6"/><circle cx="107.4" cy="1.5" r="0.75" fill="#e6e6e6"/><circle cx="110.5" cy="1.5" r="0.75" fill="#e6e6e6"/><circle cx="113.60000000000001" cy="1.5" r="0.75" fill="#e6e6e6"/><circle cx="116.7" cy="1.5" r="0.75" fill="#e6e6e6"/><circle cx="119.8" cy="1.5" r="0.75" fill="#e6e6e6"/><circle cx="122.9" cy="1.5" r="0.75" fill="#e6e6e6"/><circle cx="126.0" cy="1.5" r="0.75" fill="#e6e6e6"/><circle cx="129.10000000000002" cy="1.5" r="0.75" fill="#e6e6e6"/><circle cx="132.20000000000002" cy="1.5" r="0.75" fill="#e6e6e6"/><circle cx="135.3" cy="1.5" r="0.75" fill="#e6e6e6"/><circle cx="138.4" cy="1.5" r="0.75" fill="#e6e6e6"/><circle cx="141.5" cy="1.5" r="0.75" fill="#e6e6e6"/><circle cx="144.6" cy="1.5" r="0.75" fill="#e6e6e6"/><circle cx="147.70000000000002" cy="1.5" r="0.75" fill="#e6e6e6"/><circle cx="150.8" cy="1.5" r="0.75" fill="#e6e6e6"/><circle cx="153.9" cy="1.5" r="0.75" fill="#e6e6e6"/><circle cx="157.0" cy="1.5" r="0.75" fill="#e6e6e6"/><circle cx="160.1" cy="1.5" r="0.75" fill="#e6e6e6"/><circle cx="163.20000000000002" cy="1.5" r="0.75" fill="#e6e6e6"/><circle cx="166.3" cy="1.5" r="0.75" fill="#e6e6e6"/><circle cx="169.4" cy="1.5" r="0.75" fill="#e6e6e6"/><circle cx="172.5" cy="1.5" r="0.75" fill="#e6e6e6"/></svg><svg style="left:1601px;top:370px;" width="18" height="18" viewBox="0 0 18 18"><circle cx="8.5" cy="8.5" r="4.6" fill="none" stroke="#f6f6f6" stroke-width="1.5"/><path d="M6.3 8.5 H10.7 M8.5 6.3 V10.7" stroke="#f6f6f6" stroke-width="1.3"/></svg><svg style="left:1631px;top:369px;" width="20" height="20" viewBox="0 0 20 20"><circle cx="9" cy="9" r="4.6" fill="none" stroke="#d2d2d2" stroke-width="1.2"/><path d="M7 9 H11" stroke="#d2d2d2" stroke-width="1.2"/><path d="M12.4 12.4 L16 16" stroke="#d2d2d2" stroke-width="1.4"/></svg><svg style="left:1662px;top:369px;" width="20" height="20" viewBox="0 0 20 20"><path d="M5.6 7.2 A4.6 4.6 0 1 1 6.5 12" fill="none" stroke="#d2d2d2" stroke-width="1.2"/><path d="M3.5 7.5 L6 9.8 L7.8 6.6" fill="none" stroke="#d2d2d2" stroke-width="1.2"/><path d="M13.2 12.6 L16.8 16.2" stroke="#d2d2d2" stroke-width="1.4"/></svg><div class="b" style="left:1698px;top:367px;width:1px;height:26px;background:#cdcdcd;"></div><svg style="left:1722px;top:372px;" width="16" height="16" viewBox="0 0 16 16"><path d="M0.8 9 L3 9 L5.5 14.5 L8.2 2 L10 11 L11.5 6.5 L13 9.5 L15.2 9.5" fill="none" stroke="#f6f6f6" stroke-width="1.4" stroke-linejoin="round"/></svg><div class="a" style="left:1745.5px;top:370px;font-size:11px;color:#f6f6f6;font-weight:700;">Data Explorer</div><div class="b" style="left:626px;top:432px;width:1202.5px;height:317px;background:#fbfbfb;"></div><div class="b" style="left:756px;top:461px;width:1049px;height:1px;background:#e9e8f0;"></div><div class="b" style="left:756px;top:529px;width:1049px;height:1px;background:#f0eff2;"></div><div class="b" style="left:756px;top:667px;width:1049px;height:1px;background:#e8e8e8;"></div><div class="a" style="left:630px;top:449.7px;width:40px;text-align:right;font-size:10px;color:#c4c4c4">7</div><div class="a" style="left:670px;top:449.7px;width:40.5px;text-align:right;font-size:10px;color:#c4c4c4">1.6</div><div class="a" style="left:708px;top:449.7px;width:40px;text-align:right;font-size:10px;color:#c4c4c4">79</div><div class="a" style="left:630px;top:518.5px;width:40px;text-align:right;font-size:10px;color:#c4c4c4">6</div><div class="a" style="left:670px;top:518.5px;width:40.5px;text-align:right;font-size:10px;color:#c4c4c4">1.2</div><div class="a" style="left:708px;top:518.5px;width:40px;text-align:right;font-size:10px;color:#c4c4c4">78</div><div class="a" style="left:630px;top:586.7px;width:40px;text-align:right;font-size:10px;color:#c4c4c4">5</div><div class="a" style="left:670px;top:586.7px;width:40.5px;text-align:right;font-size:10px;color:#c4c4c4">0.8</div><div class="a" style="left:708px;top:586.7px;width:40px;text-align:right;font-size:10px;color:#c4c4c4">77</div><div class="a" style="left:630px;top:655.7px;width:40px;text-align:right;font-size:10px;color:#c4c4c4">4</div><div class="a" style="left:670px;top:655.7px;width:40.5px;text-align:right;font-size:10px;color:#c4c4c4">0.4</div><div class="a" style="left:708px;top:655.7px;width:40px;text-align:right;font-size:10px;color:#c4c4c4">76</div><div class="a" style="left:624.6px;top:554px;width:60px;text-align:center;font-size:10px;color:#c4c4c4;transform:rotate(-90deg)">spm</div><div class="a" style="left:656.5px;top:554px;width:60px;text-align:center;font-size:10px;color:#c4c4c4;transform:rotate(-90deg)">bbl/d</div><div class="a" style="left:697.5px;top:554px;width:60px;text-align:center;font-size:10px;color:#c4c4c4;transform:rotate(-90deg)">psi</div><div class="a" style="left:765.75px;top:678px;width:60px;text-align:center;font-size:10px;color:#c4c4c4">12:00</div><div class="a" style="left:857.35px;top:678px;width:60px;text-align:center;font-size:10px;color:#c4c4c4">15:00</div><div class="a" style="left:948.95px;top:678px;width:60px;text-align:center;font-size:10px;color:#c4c4c4">18:00</div><div class="a" style="left:1040.55px;top:678px;width:60px;text-align:center;font-size:10px;color:#c4c4c4">21:00</div><div class="a" style="left:1132.15px;top:678px;width:60px;text-align:center;font-size:10px;color:#c4c4c4">4 Feb</div><div class="a" style="left:1223.75px;top:678px;width:60px;text-align:center;font-size:10px;color:#c4c4c4">03:00</div><div class="a" style="left:1315.35px;top:678px;width:60px;text-align:center;font-size:10px;color:#c4c4c4">06:00</div><div class="a" style="left:1406.9499999999998px;top:678px;width:60px;text-align:center;font-size:10px;color:#c4c4c4">09:00</div><div class="a" style="left:1498.55px;top:678px;width:60px;text-align:center;font-size:10px;color:#c4c4c4">12:00</div><div class="a" style="left:1590.15px;top:678px;width:60px;text-align:center;font-size:10px;color:#c4c4c4">15:00</div><div class="a" style="left:1681.75px;top:678px;width:60px;text-align:center;font-size:10px;color:#c4c4c4">18:00</div><div class="a" style="left:1745px;top:678px;width:60px;text-align:right;font-size:10px;color:#c4c4c4">21:00</div><svg style="left:756px;top:667px;" width="1049" height="5" viewBox="0 0 1049 5"><path d="M39.75 0 V4" stroke="#e2e2e2" stroke-width="1"/><path d="M131.35000000000002 0 V4" stroke="#e2e2e2" stroke-width="1"/><path d="M222.95000000000005 0 V4" stroke="#e2e2e2" stroke-width="1"/><path d="M314.54999999999995 0 V4" stroke="#e2e2e2" stroke-width="1"/><path d="M406.1500000000001 0 V4" stroke="#e2e2e2" stroke-width="1"/><path d="M497.75 0 V4" stroke="#e2e2e2" stroke-width="1"/><path d="M589.3499999999999 0 V4" stroke="#e2e2e2" stroke-width="1"/><path d="M680.9499999999998 0 V4" stroke="#e2e2e2" stroke-width="1"/><path d="M772.55 0 V4" stroke="#e2e2e2" stroke-width="1"/><path d="M864.1500000000001 0 V4" stroke="#e2e2e2" stroke-width="1"/><path d="M955.75 0 V4" stroke="#e2e2e2" stroke-width="1"/><path d="M1047.35 0 V4" stroke="#e2e2e2" stroke-width="1"/></svg><svg style="left:756px;top:432px;" width="1049" height="317" viewBox="0 0 1049 317"><polyline points="0.0,51.1 1.3,171.5 2.4,56.1 3.4,165.0 4.5,60.6 5.5,172.8 6.9,54.6 8.3,176.0 9.4,50.6 10.5,133.8 11.7,54.2 13.0,164.8 14.1,82.2 15.2,170.3 16.3,94.5 17.4,171.4 18.7,76.0 20.1,169.9 21.4,55.8 22.5,152.5 23.7,77.1 25.0,172.1 26.1,105.5 27.3,129.9 28.6,62.9 29.9,169.4 31.2,55.5 32.3,164.8 33.6,52.5 34.7,130.6 35.9,61.4 37.2,136.9 38.4,61.4 39.8,166.5 40.9,55.8 42.1,164.1 43.3,56.9 44.7,144.5 45.9,65.4 47.3,156.0 48.6,54.6 49.6,130.0 50.7,51.3 51.8,164.0 52.9,54.1 53.9,147.7 54.9,53.9 56.1,175.9 57.5,55.8 58.5,168.8 59.6,70.3 60.6,144.9 61.7,49.4 62.9,155.6 64.2,54.1 65.2,145.0 66.6,52.1 67.9,155.3 69.2,96.3 70.3,169.0 71.3,52.9 72.4,158.6 73.6,107.5 75.0,167.1 76.1,51.9 77.3,154.9 78.5,99.0 79.5,157.1 80.8,84.5 81.9,138.6 83.2,80.8 84.4,151.2 85.5,51.1 86.8,132.7 88.2,92.6 89.3,165.8 90.3,92.2 91.5,141.9 92.9,72.5 94.0,167.4 95.2,54.9 96.3,139.3 97.4,61.7 98.6,144.1 99.8,49.3 101.0,164.1 102.3,55.6 103.6,168.6 104.8,60.0 105.9,167.5 107.0,85.8 108.2,157.2 109.4,56.1 110.6,142.5 111.8,62.2 113.1,158.1 114.2,62.2 115.5,165.7 116.7,52.4 117.7,153.1 119.1,59.0 120.3,176.4 121.7,62.3 122.9,177.9 124.2,55.0 125.4,166.7 126.5,63.9 127.8,164.3 128.9,56.2 129.9,153.2 131.3,52.7 132.3,136.7 133.4,61.8 134.7,166.1 136.1,58.8 137.1,173.6 138.3,62.1 139.5,130.7 140.9,61.1 142.1,171.7 143.4,50.8 144.6,165.5 145.7,51.8 146.8,174.6 147.9,51.5 149.1,167.5 150.1,87.8 151.2,177.1 152.2,82.4 153.4,140.6 154.6,107.2 155.7,150.6 157.0,53.9 158.0,165.0 159.3,51.3 160.4,155.9 161.6,52.4 162.7,166.2 163.9,62.5 165.3,167.4 166.7,54.0 167.7,170.6 168.9,56.1 169.9,165.3 171.1,49.3 172.2,172.2 173.4,92.6 174.7,140.5 175.8,69.7 177.1,129.4 178.4,91.2 179.7,132.5 180.9,60.7 182.3,146.7 183.6,94.2 184.7,165.9 185.8,60.7 187.1,148.0 188.3,49.0 189.7,144.1 190.9,66.0 192.2,165.0 193.3,72.2 194.6,143.8 195.7,58.6 197.0,148.6 198.1,52.6 199.4,171.9 200.4,52.8 201.6,149.6 202.8,55.5 203.9,176.5 205.0,105.1 206.0,175.5 207.4,52.8 208.5,134.7 209.7,56.3 211.1,175.5 212.3,94.7 213.4,143.6 214.4,55.9 215.6,166.0 216.7,60.8 217.7,154.9 218.8,95.1 220.1,169.2 221.3,89.5 222.4,167.9 223.5,60.7 224.6,136.0 225.7,51.7 226.8,156.3 228.2,61.8 229.5,174.1 230.6,83.3 231.9,137.2 232.9,68.7 234.1,168.2 235.4,74.7 236.6,171.8 237.8,51.3 238.9,143.9 240.0,107.8 241.1,166.7 242.2,50.3 243.3,172.0 244.6,81.6 245.8,169.3 246.9,52.9 248.3,171.0 249.6,72.7 250.7,169.6 251.8,101.2 253.2,164.5 254.5,84.3 255.7,169.5 257.1,101.5 258.5,165.5 259.5,58.5 260.9,148.7 262.2,56.7 263.2,135.4 264.6,53.3 265.7,172.9 266.9,50.0 268.1,169.4 269.2,49.1 270.4,177.4 271.6,84.4 272.7,177.4 274.0,49.3 275.2,141.4 276.3,104.6 277.4,168.7 278.5,71.9 279.9,144.2 280.9,77.0 282.3,167.1 283.6,62.3 284.8,167.1 285.9,105.7 287.0,167.0 288.4,49.7 289.4,176.6 290.8,107.9 292.1,166.6 293.5,64.4 294.8,169.2 295.9,49.0 297.0,177.4 298.1,72.3 299.2,154.3 300.4,55.6 301.5,134.2 302.7,64.4 303.9,152.5 304.9,49.9 306.2,174.5 307.6,52.8 309.0,136.4 310.3,52.9 311.3,157.3 312.5,64.1 313.6,177.4 315.0,52.5 316.2,177.0 317.2,96.2 318.6,147.4 319.7,54.1 321.0,166.8 322.3,49.9 323.3,168.6 324.7,107.5 325.8,165.3 327.0,83.1 328.1,172.7 329.4,101.1 330.7,175.8 331.8,54.2 333.1,167.5 334.2,61.4 335.4,169.5 336.8,52.2 338.1,159.7 339.2,60.5 340.5,129.3 341.6,51.7 343.0,177.0 344.2,83.2 345.3,158.3 346.3,57.7 347.4,166.0 348.5,57.4 349.7,164.2 350.9,71.3 352.0,175.1 353.2,50.4 354.4,172.9 355.4,58.7 356.6,168.3 357.9,56.9 359.1,176.1 360.5,51.8 361.8,164.1 363.1,60.5 364.3,142.7 365.4,56.7 366.6,130.8 367.9,56.1 368.9,171.3 370.3,55.9 371.6,134.3 372.7,106.9 373.9,177.0 375.0,90.9 376.3,175.0 377.4,60.8 378.8,167.1 379.9,54.4 381.0,174.1 382.3,56.9 383.6,175.7 384.7,56.7 385.9,169.9 387.2,58.2 388.3,164.3 389.6,52.3 390.9,142.7 392.0,50.5 393.0,165.3 394.2,49.6 395.5,174.3 396.8,49.8 398.0,177.3 399.0,107.8 400.3,134.2 401.7,62.4 403.1,175.0 404.4,53.9 405.7,176.6 406.9,69.5 408.1,134.7 409.2,53.5 410.2,166.3 411.6,103.3 412.6,131.7 413.8,54.0 415.2,172.1 416.5,62.9 417.8,175.2 418.9,89.0 420.0,142.2 421.1,65.2 422.4,172.9 423.8,58.3 425.0,164.5 426.0,55.1 427.2,132.2 428.3,64.0 429.3,165.5 430.5,57.2 431.7,172.7 432.9,62.1 434.0,165.3 435.2,98.2 436.4,164.2 437.7,53.9 438.9,177.1 440.2,61.6 441.2,169.7 442.3,59.9 443.3,177.2 444.4,57.5 445.6,154.0 446.7,53.2 447.7,153.1 449.0,60.8 450.3,174.4 451.4,50.5 452.5,168.7 453.8,101.0 455.1,171.8 456.3,86.5 457.4,158.9 458.5,63.7 459.6,174.4 461.0,77.7 462.3,167.3 463.7,58.7 464.9,143.0 466.3,101.6 467.5,146.3 468.6,57.7 469.6,132.6 470.6,62.0 471.8,164.4 472.8,91.5 474.1,130.1 475.3,60.4 476.6,130.1 478.0,105.5 479.0,165.6 480.0,99.5 481.3,148.2 482.4,50.4 483.7,168.5 484.9,52.6 486.0,139.8 487.1,85.7 488.4,129.0 489.6,59.8 490.7,145.2 491.8,67.1 493.2,164.0 494.2,107.0 495.2,170.9 496.6,55.9 497.7,136.3 499.1,52.0 500.4,165.5 501.6,60.0 502.9,148.1 504.0,54.5 505.4,176.4 506.4,52.7 507.8,169.3 509.1,55.5 510.3,152.1 511.6,53.6 512.6,149.2 513.9,55.1 515.3,165.8 516.4,73.7 517.5,173.8 518.9,51.2 520.0,171.3 521.0,51.6 522.4,131.3 523.8,54.4 525.2,151.5 526.4,57.9 527.4,169.4 528.4,60.1 529.7,172.9 530.9,57.5 532.0,157.1 533.2,59.5 534.4,174.1 535.7,94.5 537.1,148.5 538.3,57.8 539.3,175.0 540.6,52.5 541.7,172.7 542.9,104.9 544.0,152.9 545.1,62.6 546.2,166.3 547.5,86.4 548.5,171.6 549.8,57.9 551.1,169.7 552.5,58.6 553.7,131.9 555.1,49.8 556.2,164.2 557.3,58.8 558.5,167.1 559.8,86.7 560.9,140.5 561.9,59.9 563.3,143.0 564.5,62.5 565.6,154.2 567.0,53.1 568.2,175.7 569.3,75.0 570.5,170.0 571.5,59.1 572.7,168.2 573.9,57.9 575.1,177.0 576.5,60.6 577.8,132.5 579.2,49.2 580.2,149.0 581.3,51.0 582.4,139.1 583.4,98.6 584.5,147.5 585.8,103.2 587.1,134.3 588.4,59.4 589.6,145.8 590.7,51.0 591.9,170.5 592.9,56.0 594.1,128.2 595.5,56.9 596.7,140.0 597.9,66.4 599.2,128.9 600.4,104.9 601.5,144.3 602.7,64.5 604.0,138.8 605.4,55.6 606.6,134.7 607.7,56.8 609.1,175.6 610.2,52.8 611.4,148.9 612.8,53.4 613.9,172.9 615.2,59.1 616.5,164.7 617.7,51.7 619.0,149.1 620.4,90.5 621.6,150.3 622.8,72.6 624.1,174.7 625.1,49.5 626.5,149.0 627.6,98.4 628.8,168.2 630.0,55.0 631.3,129.7 632.5,50.7 633.8,176.9 635.0,54.4 636.2,159.4 637.4,50.4 638.7,166.1 639.7,58.6 640.7,130.8 642.1,49.2 643.4,174.3 644.4,59.8 645.7,151.4 646.7,58.9 647.9,136.1 649.3,63.5 650.3,154.2 651.4,59.2 652.4,143.6 653.4,57.0 654.6,132.6 655.9,58.0 657.2,169.4 658.5,98.3 659.7,164.8 661.1,100.2 662.3,159.3 663.6,53.3 664.8,140.1 666.0,61.5 667.4,164.0 668.5,57.2 669.8,129.4 671.1,102.0 672.4,175.9 673.7,104.1 674.8,171.8 676.1,59.5 677.5,172.5 678.8,51.9 679.9,153.3 681.1,60.3 682.4,172.1 683.7,86.5 684.9,166.6 686.0,58.8 687.1,169.6 688.3,49.6 689.7,165.5 691.0,70.0 692.2,171.3 693.2,62.9 694.6,171.9 695.7,82.2 697.1,154.2 698.5,49.5 699.5,165.2 700.6,61.2 701.7,157.1 702.8,54.6 703.8,136.2 705.0,62.4 706.3,170.3 707.4,107.6 708.5,167.6 709.6,103.7 710.9,175.0 712.2,62.8 713.2,174.6 714.6,76.4 715.9,131.4 717.0,50.7 718.2,167.3 719.2,63.6 720.5,164.5 721.9,62.1 723.2,132.5 724.4,62.0 725.8,142.5 726.9,84.5 728.1,167.1 729.2,87.9 730.2,136.5 731.4,52.8 732.7,166.3 733.9,61.6 735.0,129.8 736.3,72.5 737.5,167.6 738.6,62.9 740.0,131.1 741.1,65.6 742.4,177.7 743.4,78.3 744.5,175.7 745.7,55.1 747.0,172.0 748.1,59.8 749.4,165.1 750.4,55.9 751.5,172.6 752.8,89.2 753.9,174.3 755.1,65.5 756.4,175.8 757.7,49.2 759.1,176.2 760.2,60.6 761.3,169.2 762.6,56.3 763.8,165.7 765.0,101.9 766.2,140.2 767.5,61.2 768.9,171.2 770.1,49.3 771.5,166.6 772.5,60.4 773.5,173.8 774.6,57.4 775.8,173.8 776.9,95.3 777.9,170.9 779.1,50.7 780.2,172.3 781.6,57.0 782.9,175.6 784.3,54.9 785.6,169.5 787.0,78.2 788.1,170.1 789.5,104.1 790.8,129.7 792.0,105.0 793.1,172.9 794.2,50.0 795.4,164.3 796.5,97.9 797.8,153.9 799.2,64.5 800.5,173.5 801.6,61.9 802.8,171.3 804.0,75.9 805.1,131.9 806.3,86.1 807.5,171.5 808.5,50.8 809.6,168.0 810.7,56.6 812.1,146.2 813.3,58.9 814.5,172.6 815.7,52.4 816.8,169.4 818.0,53.9 819.4,171.8 820.6,62.8 821.7,133.1 822.7,82.8 823.7,170.2 825.0,52.2 826.4,132.9 827.5,58.5 828.8,154.3 830.0,96.4 831.3,175.0 832.6,68.7 833.9,174.7 835.2,62.5 836.4,175.0 837.7,54.3 838.9,174.1 840.0,56.8 841.2,175.0 842.5,55.2 843.6,166.0 844.8,50.2 846.2,175.8 847.5,72.2 848.7,128.3 849.7,56.0 851.1,145.2 852.5,56.2 853.8,169.0 855.0,62.3 856.3,165.4 857.4,56.9 858.7,158.9 859.9,57.7 861.3,171.4 862.6,53.5 864.0,144.4 865.0,94.0 866.3,156.4 867.5,53.1 868.7,166.6 869.8,57.4 870.9,148.4 871.9,60.0 873.1,128.1 874.2,89.4 875.5,171.0 876.7,58.1 877.9,146.4 879.1,51.2 880.4,165.4 881.4,60.5 882.7,130.0 883.7,77.5 885.0,166.4 886.1,61.7 887.3,170.3 888.5,61.5 889.7,142.1 890.9,49.6 892.3,138.1 893.7,76.7 894.9,143.9 896.3,54.5 897.6,168.3 898.9,60.1 900.0,169.0 901.1,76.1 902.3,171.5 903.5,49.9 904.5,139.2 905.6,53.0 906.7,173.3 907.9,58.9 908.9,175.7 909.9,60.7 911.3,168.9 912.6,62.4 913.6,144.2 914.7,50.8 916.0,176.6 917.2,52.4 918.5,176.2 919.5,56.6 920.7,140.3 921.9,53.4 923.1,166.5 924.4,58.3 925.5,169.1 926.7,49.9 927.8,165.8 929.1,54.6 930.4,156.2 931.8,52.9 932.8,149.2 933.9,58.2 935.2,175.9 936.3,51.5 937.4,151.5 938.7,49.6 939.7,168.2 940.9,53.4 942.1,175.8 943.4,74.5 944.6,139.2 945.6,97.9 946.7,176.0 947.9,52.4 949.0,134.7 950.3,66.9 951.6,174.5 952.9,50.3 954.3,177.0 955.6,100.3 956.8,164.8 958.1,56.2 959.5,174.7 960.5,99.3 961.6,177.6 962.9,52.5 963.9,169.8 965.0,50.9 966.2,135.6 967.3,55.2 968.7,168.2 970.1,56.9 971.2,145.5 972.5,58.3 973.8,174.7 975.1,53.1 976.2,164.8 977.3,58.8 978.5,168.5 979.7,51.4 980.7,177.9 982.0,59.0 983.4,165.5 984.6,51.7 985.8,176.9 987.1,62.1 988.4,167.4 989.4,59.8 990.8,166.6 992.0,104.7 993.1,154.6 994.4,51.6 995.7,169.2 996.9,60.6 998.0,171.9 999.3,94.8 1000.6,143.8 1001.8,53.2 1003.1,173.6 1004.1,62.6 1005.2,170.2 1006.2,63.1 1007.6,153.2 1008.7,58.3 1010.0,168.7 1011.1,100.2 1012.5,168.1 1013.7,53.9 1014.7,168.5 1015.9,103.9 1017.3,158.8 1018.5,65.7 1019.8,137.5 1021.0,84.6 1022.3,168.8 1023.6,51.6 1024.9,165.2 1026.2,57.1 1027.3,171.9 1028.5,51.5 1029.9,165.6 1031.2,50.3 1032.4,170.8 1033.6,57.0 1034.7,172.2 1035.7,50.0 1036.9,145.6 1038.2,68.2 1039.6,131.3 1040.9,51.4 1042.3,174.8 1043.3,65.6 1044.4,164.2 1045.7,53.2 1047.0,176.4 1048.2,88.3" fill="none" stroke="#f5da88" stroke-opacity="0.5" stroke-width="1.05"/><polyline points="0.0,64.4 1.2,60.0 2.4,63.7 3.6,61.2 4.8,64.0 6.0,63.6 7.2,64.6 8.4,60.2 9.6,61.8 10.8,64.3 12.0,65.7 13.2,64.3 14.4,60.1 15.6,63.7 16.8,60.6 18.0,63.5 19.2,65.2 20.4,60.9 21.6,66.2 22.8,64.7 24.0,62.1 25.2,61.8 26.4,63.5 27.6,66.0 28.8,64.5 30.0,61.6 31.2,61.1 32.4,61.7 33.6,66.2 34.8,62.4 36.0,64.8 37.2,63.2 38.4,65.8 39.6,63.9 40.8,62.5 42.0,67.3 43.2,65.2 44.4,66.2 45.6,66.8 46.8,67.6 48.0,61.5 49.2,63.5 50.4,62.1 51.6,64.3 52.8,66.5 54.0,65.9 55.2,60.9 56.4,61.7 57.6,65.7 58.8,64.7 60.0,62.7 61.2,63.1 62.4,61.0 63.6,65.2 64.8,62.2 66.0,65.2 67.2,63.4 68.4,59.8 69.6,61.3 70.8,60.5 72.0,64.7 73.2,62.7 74.4,59.0 75.6,59.7 76.8,60.8 78.0,61.4 79.2,62.0 80.4,60.6 81.6,60.3 82.8,58.0 84.0,61.5 85.2,59.8 86.4,57.7 87.6,60.4 88.8,63.6 90.0,57.5 91.2,58.0 92.4,61.3 93.6,58.6 94.8,58.6 96.0,60.2 97.2,58.7 98.4,60.8 99.6,60.6 100.8,63.5 102.0,63.8 103.2,57.8 104.4,61.2 105.6,62.7 106.8,63.4 108.0,62.9 109.2,62.1 110.4,62.2 111.6,60.5 112.8,60.1 114.0,63.5 115.2,64.1 116.4,64.6 117.6,63.0 118.8,60.7 120.0,63.8 121.2,63.7 122.4,62.3 123.6,63.2 124.8,61.5 126.0,62.9 127.2,62.1 128.4,59.9 129.6,61.8 130.8,61.8 132.0,66.2 133.2,63.0 134.4,62.4 135.6,61.7 136.8,61.7 138.0,62.6 139.2,61.3 140.4,60.6 141.6,66.2 142.8,63.6 144.0,63.7 145.2,64.6 146.4,63.1 147.6,62.4 148.8,61.9 150.0,63.6 151.2,63.8 152.4,66.6 153.6,65.7 154.8,68.3 156.0,64.6 157.2,68.5 158.4,66.5 159.6,63.5 160.8,64.3 162.0,67.0 163.2,69.8 164.4,65.9 165.6,68.7 166.8,66.7 168.0,69.7 169.2,64.7 170.4,67.5 171.6,70.0 172.8,65.9 174.0,65.7 175.2,64.1 176.4,64.9 177.6,65.4 178.8,68.1 180.0,64.9 181.2,65.9 182.4,64.6 183.6,67.0 184.8,68.6 186.0,67.1 187.2,64.1 188.4,67.4 189.6,68.6 190.8,66.0 192.0,62.4 193.2,66.9 194.4,67.0 195.6,63.4 196.8,61.8 198.0,61.9 199.2,63.9 200.4,65.8 201.6,64.0 202.8,65.6 204.0,60.8 205.2,61.3 206.4,63.8 207.6,62.9 208.8,61.1 210.0,62.6 211.2,60.1 212.4,58.1 213.6,60.1 214.8,57.5 216.0,61.0 217.2,58.9 218.4,59.7 219.6,60.1 220.8,57.6 222.0,58.7 223.2,55.6 224.4,61.2 225.6,58.6 226.8,61.1 228.0,54.9 229.2,58.2 230.4,58.7 231.6,55.9 232.8,54.2 234.0,54.4 235.2,54.1 236.4,57.9 237.6,53.3 238.8,57.8 240.0,55.0 241.2,55.6 242.4,55.7 243.6,55.3 244.8,55.7 246.0,55.2 247.2,53.2 248.4,55.6 249.6,52.3 250.8,55.0 252.0,55.2 253.2,55.0 254.4,51.8 255.6,55.2 256.8,57.3 258.0,54.6 259.2,54.2 260.4,56.5 261.6,59.9 262.8,55.4 264.0,55.4 265.2,59.1 266.4,60.9 267.6,61.6 268.8,58.8 270.0,62.7 271.2,57.7 272.4,60.9 273.6,56.5 274.8,55.9 276.0,56.4 277.2,55.8 278.4,58.5 279.6,58.7 280.8,56.1 282.0,60.8 283.2,57.0 284.4,55.5 285.6,55.5 286.8,58.9 288.0,59.9 289.2,54.9 290.4,53.9 291.6,58.5 292.8,55.0 294.0,59.5 295.2,56.3 296.4,57.0 297.6,55.0 298.8,57.7 300.0,55.4 301.2,54.4 302.4,57.9 303.6,52.7 304.8,56.5 306.0,52.1 307.2,55.6 308.4,53.9 309.6,56.7 310.8,51.4 312.0,54.5 313.2,53.3 314.4,56.4 315.6,56.4 316.8,54.3 318.0,51.5 319.2,51.5 320.4,51.4 321.6,52.4 322.8,50.9 324.0,50.6 325.2,54.0 326.4,53.1 327.6,50.7 328.8,55.2 330.0,50.3 331.2,52.6 332.4,50.0 333.6,54.5 334.8,54.6 336.0,50.8 337.2,54.0 338.4,54.5 339.6,51.0 340.8,51.4 342.0,52.4 343.2,55.1 344.4,50.4 345.6,53.8 346.8,53.3 348.0,52.4 349.2,53.3 350.4,55.3 351.6,51.0 352.8,55.4 354.0,52.1 355.2,54.8 356.4,55.8 357.6,52.1 358.8,57.1 360.0,58.6 361.2,54.8 362.4,53.6 363.6,54.8 364.8,61.0 366.0,55.5 367.2,61.9 368.4,57.7 369.6,61.7 370.8,57.7 372.0,58.4 373.2,61.8 374.4,58.2 375.6,60.0 376.8,63.9 378.0,62.8 379.2,64.0 380.4,64.8 381.6,58.9 382.8,60.4 384.0,64.1 385.2,63.7 386.4,59.7 387.6,62.8 388.8,61.3 390.0,63.6 391.2,62.7 392.4,63.4 393.6,70.9 394.8,67.8 396.0,73.2 397.2,70.2 398.4,74.3 399.6,73.8 400.8,77.5 402.0,77.7 403.2,82.8 404.4,81.1 405.6,86.7 406.8,87.0 408.0,86.5 409.2,89.9 410.4,92.8 411.6,97.4 412.8,95.7 414.0,96.8 415.2,103.6 416.4,105.0 417.6,106.0 418.8,105.0 420.0,106.3 421.2,108.7 422.4,108.6 423.6,109.7 424.8,113.9 426.0,114.4 427.2,116.6 428.4,116.5 429.6,115.5 430.8,121.0 432.0,122.0 433.2,122.5 434.4,123.8 435.6,126.1 436.8,129.4 438.0,130.1 439.2,130.5 440.4,129.9 441.6,130.8 442.8,132.9 444.0,137.8 445.2,135.2 446.4,135.0 447.6,135.0 448.8,133.1 450.0,138.3 451.2,131.8 452.4,135.4 453.6,137.2 454.8,132.7 456.0,134.8 457.2,131.2 458.4,126.8 459.6,123.0 460.8,119.0 462.0,120.1 463.2,116.3 464.4,113.6 465.6,104.6 466.8,105.2 468.0,99.3 469.2,97.9 470.4,93.7 471.6,88.7 472.8,89.4 474.0,79.7 475.2,81.4 476.4,81.1 477.6,77.9 478.8,77.4 480.0,79.0 481.2,73.1 482.4,74.6 483.6,74.3 484.8,71.0 486.0,72.1 487.2,69.0 488.4,68.9 489.6,68.4 490.8,67.8 492.0,64.5 493.2,65.5 494.4,64.5 495.6,63.2 496.8,66.5 498.0,65.0 499.2,69.9 500.4,67.9 501.6,70.2 502.8,69.7 504.0,70.2 505.2,69.3 506.4,69.5 507.6,75.3 508.8,73.5 510.0,74.3 511.2,75.0 512.4,77.6 513.6,74.6 514.8,74.6 516.0,79.3 517.2,77.5 518.4,79.1 519.6,80.8 520.8,81.7 522.0,82.0 523.2,77.2 524.4,79.9 525.6,83.3 526.8,83.7 528.0,79.7 529.2,80.4 530.4,81.5 531.6,81.0 532.8,83.1 534.0,86.5 535.2,85.2 536.4,85.2 537.6,83.4 538.8,85.8 540.0,90.2 541.2,95.8 542.4,101.9 543.6,107.2 544.8,111.9 546.0,114.3 547.2,113.1 548.4,119.2 549.6,119.9 550.8,123.5 552.0,124.4 553.2,127.9 554.4,130.4 555.6,133.3 556.8,133.7 558.0,137.5 559.2,142.6 560.4,142.0 561.6,145.4 562.8,151.6 564.0,151.4 565.2,154.4 566.4,156.5 567.6,163.0 568.8,160.9 570.0,162.9 571.2,161.9 572.4,155.3 573.6,154.3 574.8,154.3 576.0,150.8 577.2,146.8 578.4,142.3 579.6,142.4 580.8,139.5 582.0,139.4 583.2,134.0 584.4,132.0 585.6,130.9 586.8,129.2 588.0,123.6 589.2,121.2 590.4,119.7 591.6,119.2 592.8,111.9 594.0,114.2 595.2,109.8 596.4,105.0 597.6,104.1 598.8,99.3 600.0,95.0 601.2,96.7 602.4,91.6 603.6,91.0 604.8,90.4 606.0,92.6 607.2,91.3 608.4,86.2 609.6,89.4 610.8,88.2 612.0,87.8 613.2,89.8 614.4,86.7 615.6,86.7 616.8,88.9 618.0,85.6 619.2,85.6 620.4,86.2 621.6,89.0 622.8,88.9 624.0,90.3 625.2,89.0 626.4,87.6 627.6,92.5 628.8,92.6 630.0,94.9 631.2,95.8 632.4,92.5 633.6,94.0 634.8,94.0 636.0,99.6 637.2,95.9 638.4,96.7 639.6,101.8 640.8,101.9 642.0,100.1 643.2,105.6 644.4,107.2 645.6,107.2 646.8,106.0 648.0,111.5 649.2,111.2 650.4,113.7 651.6,117.9 652.8,118.2 654.0,120.0 655.2,116.8 656.4,119.5 657.6,122.1 658.8,120.3 660.0,128.1 661.2,125.0 662.4,126.3 663.6,129.1 664.8,132.0 666.0,139.2 667.2,140.6 668.4,143.7 669.6,146.4 670.8,147.4 672.0,152.4 673.2,159.3 674.4,162.2 675.6,165.9 676.8,165.4 678.0,168.4 679.2,170.8 680.4,177.2 681.6,175.3 682.8,173.7 684.0,171.6 685.2,170.0 686.4,166.4 687.6,167.0 688.8,160.9 690.0,163.3 691.2,158.8 692.4,153.3 693.6,152.8 694.8,152.0 696.0,149.0 697.2,147.8 698.4,142.9 699.6,138.6 700.8,138.0 702.0,130.9 703.2,129.6 704.4,126.3 705.6,121.0 706.8,116.2 708.0,115.4 709.2,108.3 710.4,107.1 711.6,98.0 712.8,96.5 714.0,93.8 715.2,86.1 716.4,87.4 717.6,78.8 718.8,82.5 720.0,80.1 721.2,85.2 722.4,83.2 723.6,85.8 724.8,85.7 726.0,88.6 727.2,90.4 728.4,89.8 729.6,91.1 730.8,96.9 732.0,94.2 733.2,101.0 734.4,98.2 735.6,99.3 736.8,101.1 738.0,105.7 739.2,106.6 740.4,102.9 741.6,104.3 742.8,101.6 744.0,105.5 745.2,104.0 746.4,100.4 747.6,99.6 748.8,103.5 750.0,99.1 751.2,104.0 752.4,100.4 753.6,99.8 754.8,101.9 756.0,100.0 757.2,101.3 758.4,98.4 759.6,102.9 760.8,98.9 762.0,101.8 763.2,97.1 764.4,100.9 765.6,101.8 766.8,97.7 768.0,95.0 769.2,96.9 770.4,98.3 771.6,95.3 772.8,97.0 774.0,93.8 775.2,95.9 776.4,97.2 777.6,95.1 778.8,96.6 780.0,92.8 781.2,97.3 782.4,92.7 783.6,97.7 784.8,98.0 786.0,97.6 787.2,94.8 788.4,93.2 789.6,93.4 790.8,95.9 792.0,94.2 793.2,96.8 794.4,92.1 795.6,96.6 796.8,101.1 798.0,101.4 799.2,103.1 800.4,102.2 801.6,104.5 802.8,107.4 804.0,113.4 805.2,114.9 806.4,111.5 807.6,116.6 808.8,111.5 810.0,115.7 811.2,118.7 812.4,115.3 813.6,119.7 814.8,118.4 816.0,115.2 817.2,117.6 818.4,118.9 819.6,118.2 820.8,122.0 822.0,118.9 823.2,122.5 824.4,118.9 825.6,117.1 826.8,119.8 828.0,116.5 829.2,119.0 830.4,120.1 831.6,118.5 832.8,117.3 834.0,114.1 835.2,116.8 836.4,113.8 837.6,116.9 838.8,113.2 840.0,113.3 841.2,108.6 842.4,105.5 843.6,104.1 844.8,97.6 846.0,94.4 847.2,96.1 848.4,88.9 849.6,88.9 850.8,86.5 852.0,84.4 853.2,82.7 854.4,82.7 855.6,88.2 856.8,83.7 858.0,86.6 859.2,87.3 860.4,85.0 861.6,87.7 862.8,86.2 864.0,89.0 865.2,89.2 866.4,88.7 867.6,88.1 868.8,91.3 870.0,91.9 871.2,93.3 872.4,95.9 873.6,100.6 874.8,97.7 876.0,99.7 877.2,93.6 878.4,99.0 879.6,95.6 880.8,97.0 882.0,95.1 883.2,95.4 884.4,91.9 885.6,94.7 886.8,90.4 888.0,90.6 889.2,88.6 890.4,90.4 891.6,90.7 892.8,88.8 894.0,94.7 895.2,92.2 896.4,98.0 897.6,98.5 898.8,103.5 900.0,107.3 901.2,109.5 902.4,108.0 903.6,111.8 904.8,116.8 906.0,121.9 907.2,117.9 908.4,120.4 909.6,119.8 910.8,119.4 912.0,115.3 913.2,117.1 914.4,113.8 915.6,115.6 916.8,108.6 918.0,113.4 919.2,108.9 920.4,107.8 921.6,104.6 922.8,104.5 924.0,106.4 925.2,105.0 926.4,100.5 927.6,100.6 928.8,98.1 930.0,97.4 931.2,96.4 932.4,95.9 933.6,98.9 934.8,97.9 936.0,96.4 937.2,96.1 938.4,97.9 939.6,101.3 940.8,103.8 942.0,104.5 943.2,105.4 944.4,104.3 945.6,108.7 946.8,111.7 948.0,110.8 949.2,105.4 950.4,108.5 951.6,105.2 952.8,103.0 954.0,107.2 955.2,104.4 956.4,103.9 957.6,99.0 958.8,102.5 960.0,102.2 961.2,101.1 962.4,99.1 963.6,98.7 964.8,97.5 966.0,95.2 967.2,94.2 968.4,98.3 969.6,99.8 970.8,102.0 972.0,100.1 973.2,106.0 974.4,104.9 975.6,109.3 976.8,105.7 978.0,112.8 979.2,113.3 980.4,111.6 981.6,117.1 982.8,114.9 984.0,115.9 985.2,116.5 986.4,114.0 987.6,114.6 988.8,116.2 990.0,113.7 991.2,112.8 992.4,109.7 993.6,111.1 994.8,110.1 996.0,108.3 997.2,108.9 998.4,107.1 999.6,103.4 1000.8,100.2 1002.0,102.8 1003.2,102.9 1004.4,98.7 1005.6,99.2 1006.8,99.7 1008.0,98.4 1009.2,92.3 1010.4,94.3 1011.6,90.3 1012.8,89.9 1014.0,93.3 1015.2,89.8 1016.4,90.0 1017.6,88.0 1018.8,86.2 1020.0,84.4 1021.2,85.8 1022.4,91.0 1023.6,91.6 1024.8,91.5 1026.0,92.2 1027.2,95.4 1028.4,100.2 1029.6,100.6 1030.8,104.0 1032.0,107.0 1033.2,104.7 1034.4,110.3 1035.6,108.7 1036.8,116.4 1038.0,115.0 1039.2,118.3 1040.4,125.4 1041.6,124.3 1042.8,126.2 1044.0,133.2 1045.2,134.1 1046.4,138.6 1047.6,138.1 1048.8,141.5" fill="none" stroke="#d49ca9" stroke-opacity="0.6" stroke-width="1"/><path d="M0 166 H1049" stroke="#b9dca9" stroke-opacity="0.8" stroke-width="1"/></svg><div class="b" style="left:931px;top:461px;width:699px;height:206px;background:rgba(100,85,205,0.09);"></div><div class="b" style="left:756px;top:445.5px;width:170px;height:92.5px;background:rgba(252,252,252,0.96);border-radius:5px;box-shadow:0 0 6px rgba(0,0,0,0.04)"></div><div class="b" style="left:756px;top:461.5px;width:170px;height:1px;background:#f4f4f4;"></div><div class="a" style="left:763px;top:449.5px;font-size:10px;color:#b8b8b8;font-weight:400;">-</div><div class="b" style="left:763.5px;top:483.05px;width:11.5px;height:1.5px;background:#d49c9c;"></div><div class="a" style="left:783px;top:473.8px;font-size:11px;color:#cacaca;font-weight:400;-webkit-text-stroke:0.2px #cacaca;">Casing Pressure (psi)</div><div class="b" style="left:907.5px;top:476.8px;width:10.5px;height:14px;background:#c6c6c6;border-radius:3px"></div><div class="b" style="left:911.5px;top:483.3px;width:2.5px;height:1px;background:#f0f0f0;"></div><div class="b" style="left:763.5px;top:502.25px;width:11.5px;height:1.5px;background:#f2d98c;"></div><div class="a" style="left:783px;top:493px;font-size:11px;color:#cacaca;font-weight:400;-webkit-text-stroke:0.2px #cacaca;">Water Flow Rate (bbl/d)</div><div class="b" style="left:907.5px;top:496px;width:10.5px;height:14px;background:#c6c6c6;border-radius:3px"></div><div class="b" style="left:911.5px;top:502.5px;width:2.5px;height:1px;background:#f0f0f0;"></div><div class="b" style="left:763.5px;top:521.55px;width:11.5px;height:1.5px;background:#a9d69b;"></div><div class="a" style="left:783px;top:512.3px;font-size:11px;color:#cacaca;font-weight:400;-webkit-text-stroke:0.2px #cacaca;">Speed SPM SP (spm)</div><div class="b" style="left:907.5px;top:515.3px;width:10.5px;height:14px;background:#c6c6c6;border-radius:3px"></div><div class="b" style="left:911.5px;top:521.8px;width:2.5px;height:1px;background:#f0f0f0;"></div><div class="b" style="left:972.7px;top:720.5px;width:15.5px;height:1.3px;background:#e0bcbc;"></div><div class="a" style="left:992.2px;top:711.3px;font-size:11px;color:#cbcbcb;font-weight:400;-webkit-text-stroke:0.2px #cbcbcb;">Casing Pressure (psi)</div><div class="b" style="left:1102.6px;top:714px;width:28.5px;height:14px;background:#c6c6c6;border-radius:3px"></div><div class="a" style="left:1106.1px;top:711.3px;font-size:10.5px;color:#f4f4f4;font-weight:400;">Raw</div><div class="b" style="left:1141px;top:720.5px;width:15.5px;height:1.3px;background:#f3e2b0;"></div><div class="a" style="left:1160.5px;top:711.3px;font-size:11px;color:#cbcbcb;font-weight:400;-webkit-text-stroke:0.2px #cbcbcb;">Water Flow Rate (bbl/d)</div><div class="b" style="left:1282px;top:714px;width:28.5px;height:14px;background:#c6c6c6;border-radius:3px"></div><div class="a" style="left:1285.5px;top:711.3px;font-size:10.5px;color:#f4f4f4;font-weight:400;">Raw</div><div class="b" style="left:1320px;top:720.5px;width:15.5px;height:1.3px;background:#c8e3c0;"></div><div class="a" style="left:1339.5px;top:711.3px;font-size:11px;color:#cbcbcb;font-weight:400;-webkit-text-stroke:0.2px #cbcbcb;">Speed SPM SP (spm)</div><div class="b" style="left:1450px;top:714px;width:28.5px;height:14px;background:#c6c6c6;border-radius:3px"></div><div class="a" style="left:1453.5px;top:711.3px;font-size:10.5px;color:#f4f4f4;font-weight:400;">Raw</div><div class="b" style="left:38px;top:24px;width:1843px;height:1152px;background:none;border:1px solid #b2b2b2"></div><div class="b" style="left:272px;top:73.5px;width:23.5px;height:23.5px;border-radius:50%;background:#abc8ec"></div><svg style="left:278px;top:79.5px;" width="12" height="12" viewBox="0 0 12 12"><path d="M7.5 2.5 L4 6 L7.5 9.5" fill="none" stroke="#f4f8fc" stroke-width="1.6" stroke-linecap="round"/></svg><div class="b" style="left:1439px;top:347px;width:155px;height:66px;background:#0058cf;"></div><div class="b" style="left:1447px;top:355px;width:139px;height:50px;background:#202020;"></div><div class="b" style="left:1458px;top:366.5px;width:115.5px;height:27px;background:none;border:1px solid #3a3a3a;border-radius:4px"></div><div class="b" style="left:1535px;top:367px;width:1px;height:26px;background:#3a3a3a;"></div><div class="b" style="left:1458px;top:366.5px;width:39px;height:27px;background:#3b3b3b;border:1.5px solid #e2e2e2;border-radius:4px"></div><svg style="left:1468px;top:373px;" width="20" height="14" viewBox="0 0 20 14"><rect x="2" y="2.2" width="9.2" height="9.8" fill="#f2f2f2"/><rect x="13.2" y="2.4" width="1.6" height="1.6" fill="#e8e8e8"/><rect x="13.2" y="6.3" width="1.6" height="1.6" fill="#e8e8e8"/><rect x="13.2" y="10.2" width="1.6" height="1.6" fill="#e8e8e8"/><rect x="16.2" y="2.4" width="1.6" height="1.6" fill="#e8e8e8"/><rect x="16.2" y="6.3" width="1.6" height="1.6" fill="#e8e8e8"/><rect x="16.2" y="10.2" width="1.6" height="1.6" fill="#e8e8e8"/></svg><svg style="left:1506px;top:373px;" width="20" height="14" viewBox="0 0 20 14"><rect x="8.6" y="2.2" width="9.4" height="9.8" fill="#cfcfcf"/><rect x="2.2" y="2.4" width="1.6" height="1.6" fill="#d8d8d8"/><rect x="2.2" y="6.3" width="1.6" height="1.6" fill="#d8d8d8"/><rect x="2.2" y="10.2" width="1.6" height="1.6" fill="#d8d8d8"/><rect x="5.2" y="2.4" width="1.6" height="1.6" fill="#d8d8d8"/><rect x="5.2" y="6.3" width="1.6" height="1.6" fill="#d8d8d8"/><rect x="5.2" y="10.2" width="1.6" height="1.6" fill="#d8d8d8"/></svg><svg style="left:1547px;top:372px;" width="16" height="16" viewBox="0 0 16 16"><rect x="2.6" y="2.2" width="10.8" height="10.8" rx="1" fill="#cfcfcf"/><path d="M1.5 1 L14.5 14.5" stroke="#202020" stroke-width="2.4"/><path d="M2.2 1.8 L14 13.8" stroke="#e8e8e8" stroke-width="1"/></svg><div class="b" style="left:1584.5px;top:367px;width:1.5px;height:26px;background:#d8d8d8;"></div><svg style="left:1600px;top:365px;" width="180" height="180" viewBox="0 0 180 180"><path d="M13 14.3 L49 27.7 L40.7 36.5 L34.7 42.3 L26.3 50.3 Z" fill="#0058cf"/><path d="M37.7 39.4 L163.7 165" stroke="#0058cf" stroke-width="8.4" stroke-linecap="round"/></svg></body></html>
